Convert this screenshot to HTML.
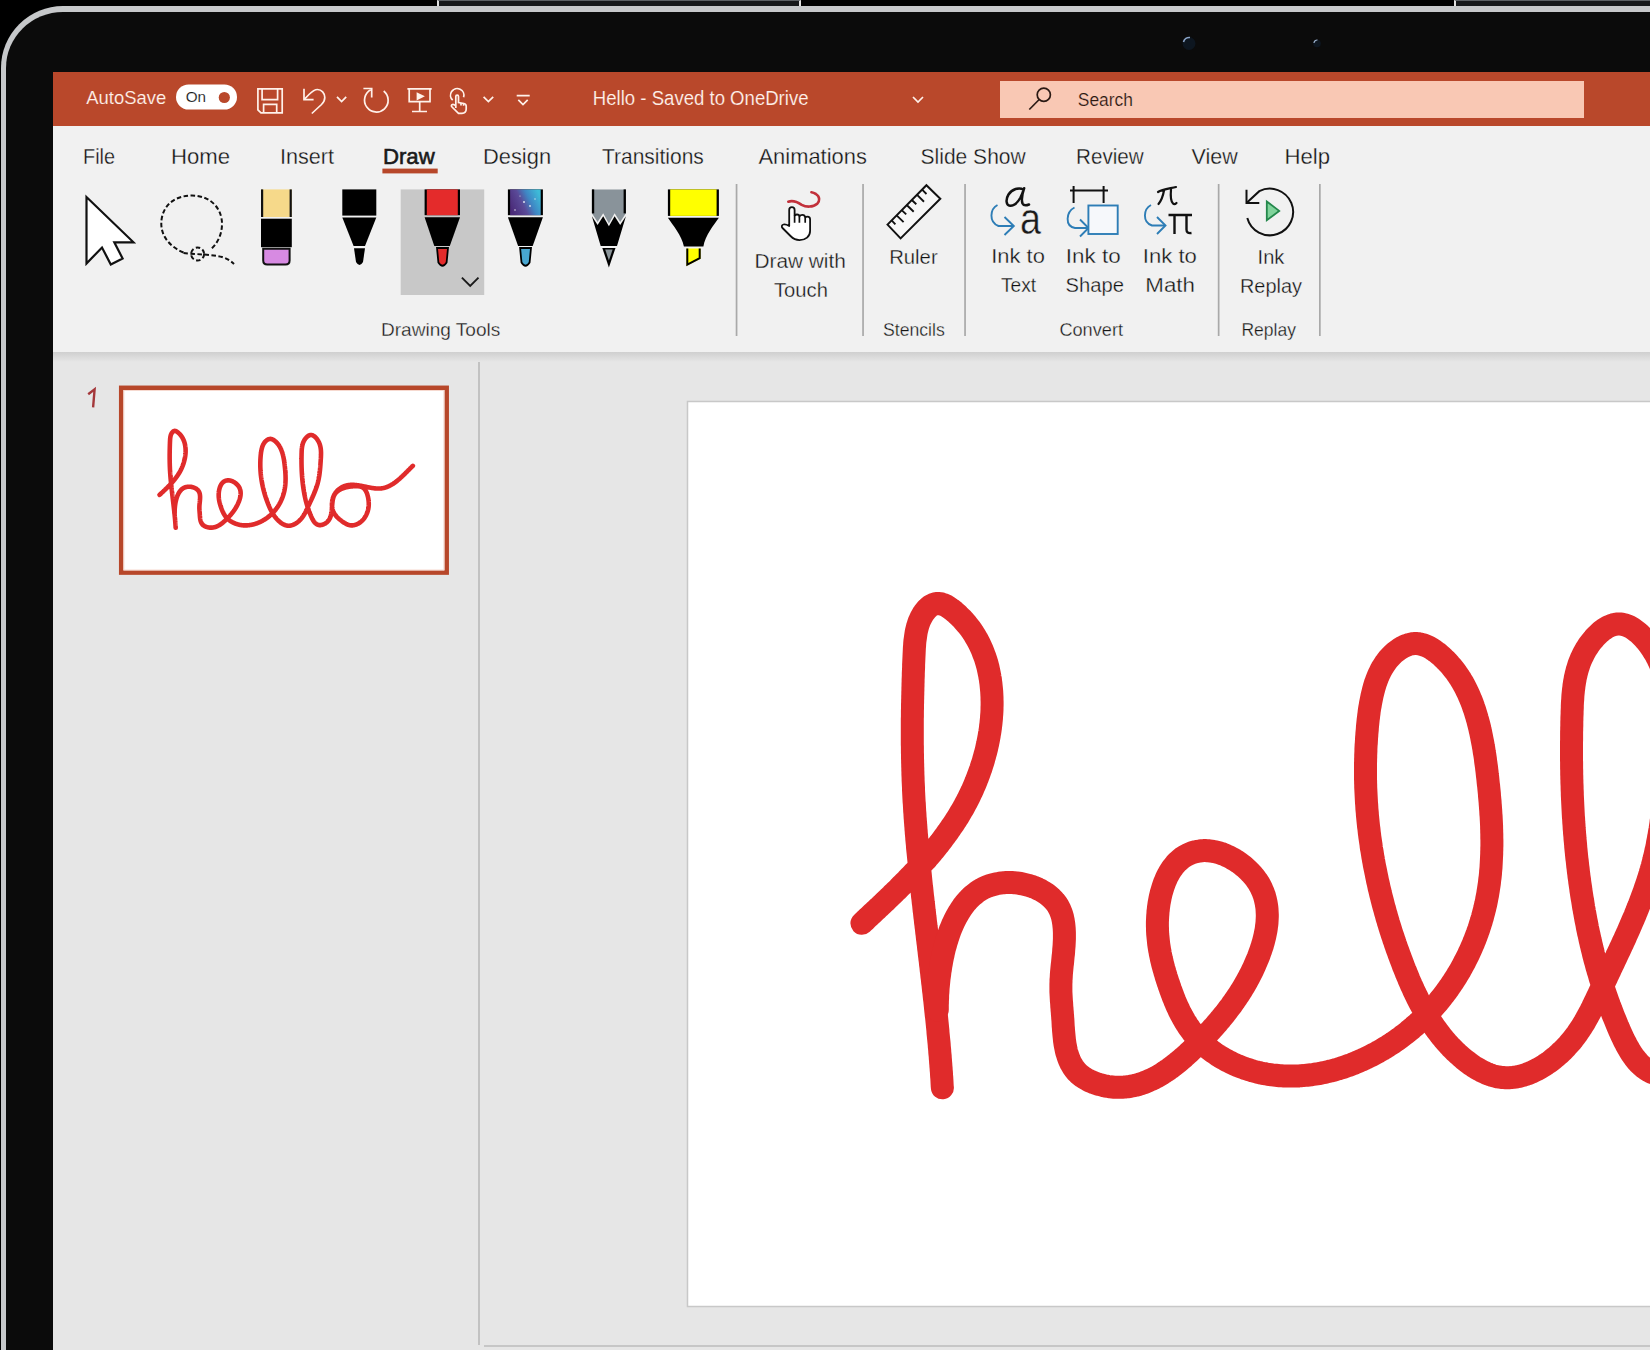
<!DOCTYPE html>
<html><head><meta charset="utf-8">
<style>
html,body{margin:0;padding:0;background:#000;}
body{width:1650px;height:1350px;overflow:hidden;position:relative;font-family:"Liberation Sans",sans-serif;}
.a{position:absolute;}
svg text{font-family:"Liberation Sans",sans-serif;}
</style></head>
<body>
<div class="a" style="left:0;top:0;width:1650px;height:1350px;background:#000"></div>
<!-- top buttons -->
<div class="a" style="left:437px;top:0;width:364px;height:7px;background:#17191b;border-top:1.5px solid #5d6165;border-left:2px solid #e0e0e0;border-right:2px solid #e0e0e0;box-sizing:border-box"></div>
<div class="a" style="left:1454px;top:0;width:200px;height:7px;background:#17191b;border-top:1.5px solid #5d6165;border-left:2px solid #e0e0e0;box-sizing:border-box"></div>
<!-- rim -->
<div class="a" style="left:1px;top:6px;width:1800px;height:1500px;box-sizing:border-box;border-top:6px solid #c6c8ca;border-left:5px solid #c6c8ca;border-top-left-radius:62px;background:#0b0b0b"></div>
<!-- screen -->
<div class="a" style="left:53px;top:72px;width:1597px;height:54.5px;background:#b9482b"></div>
<div class="a" style="left:1000px;top:81px;width:584px;height:37px;background:#f9c8b4"></div>
<div class="a" style="left:53px;top:126px;width:1597px;height:226px;background:#f1f1f1"></div>
<div class="a" style="left:53px;top:352px;width:1597px;height:998px;background:#e6e6e6"></div>
<div class="a" style="left:53px;top:352px;width:1597px;height:10px;background:linear-gradient(#cfcfcf,#e6e6e6)"></div>
<svg class="a" style="left:0;top:0" width="1650" height="1350" viewBox="0 0 1650 1350">
<!-- cameras -->
<circle cx="1189" cy="43.5" r="6.5" fill="#0d1620"/>
<path d="M1183.5,42 A6,6 0 0 1 1190,37.5" stroke="#8aa4c8" stroke-width="1.6" fill="none"/>
<circle cx="1317" cy="43.5" r="3.8" fill="#0d1620"/>
<path d="M1314,43 A3.2,3.2 0 0 1 1317.5,40" stroke="#9fb4d0" stroke-width="1.2" fill="none"/>
<!-- title bar icons -->
<g fill="none" stroke="#fff1ea" stroke-width="1.7" stroke-linecap="butt" stroke-linejoin="miter">
<path d="M257.9,88.9 H282.2 V112.9 H261 L257.9,109.8 Z"/>
<path d="M262.1,88.9 V99.6 H277.6 V88.9"/>
<path d="M263.6,112.9 V104.4 H276.7 V112.9"/>
<path d="M304,88.7 V99.6 H313.6"/>
<path d="M304.5,99.2 L309,94.5 C312,91.5 314.5,89.5 317.5,89.5 C321.5,89.5 324.8,93 324.8,97.5 C324.8,100.5 323.5,102.5 321.5,104.5 L311.8,113.5"/>
<path d="M337,96.8 L341.6,101.6 L346.2,96.8"/>
<path d="M383.7,91 A11.8,11.8 0 1 1 370.8,89.8"/>
<path d="M363.4,88.5 H371.7 V97.6"/>
<path d="M407.4,88.9 H431.7 M409.2,88.9 V101.6 H430 V88.9 M419.7,101.6 V111.5 M412,111.5 H427"/>
<path d="M452.7,100.2 A6.7,6.7 0 1 1 463.6,97.2"/>
<path d="M455.8,108 V96.5 A1.35,1.35 0 0 1 458.5,96.5 V102.5 L464,103.5 C465.5,103.8 466.2,104.8 466.2,106.3 V109 C466.2,111.5 464.5,113.3 462,113.3 H458.5 L452,107 C451,106 451.3,104.8 452.5,104.5 C453.5,104.3 454.5,104.8 455.8,106"/>
<path d="M461,102.9 V105.5 M463.6,103.3 V105.8"/>
<path d="M483.6,96.8 L488.4,101.6 L493.2,96.8"/>
<path d="M516.7,95.6 H529.7 M518.3,99.8 L523,104.5 L527.7,99.8"/>
<path d="M913,97 L918,102 L923,97"/>
</g>
<path d="M416.6,92.2 L424.9,96.3 L416.6,100.4 Z" fill="#fff1ea"/>
<rect x="176" y="84.4" width="61" height="25.2" rx="12.6" fill="#fff"/>
<circle cx="224.3" cy="97.5" r="5.6" fill="#b9482b"/>
<g fill="none" stroke="#2b1a14" stroke-width="1.7">
<circle cx="1043.8" cy="94.8" r="6.6"/>
<path d="M1039.2,99.5 L1029.3,109.5"/>
</g>
<!-- tab underline -->
<rect x="382.4" y="168.6" width="55.3" height="4.8" fill="#b7472a"/>
<!-- separators -->
<g fill="#a9a9a9">
<rect x="735.7" y="184" width="1.7" height="152"/>
<rect x="862.2" y="184" width="1.7" height="152"/>
<rect x="964.2" y="184" width="1.7" height="152"/>
<rect x="1217.8" y="184" width="1.7" height="152"/>
<rect x="1319" y="184" width="1.7" height="152"/>
</g>
<!-- select arrow -->
<path d="M86.5,197 V263.5 L102,247.5 L110.8,264.5 L122.6,258.5 L114.3,242.3 H133.5 Z" fill="#fff" stroke="#111" stroke-width="2.2" stroke-linejoin="miter"/>
<!-- lasso -->
<g fill="none" stroke="#111" stroke-width="2" stroke-dasharray="4.5 2.5">
<path d="M183.5,252.5 C166,245 160,232 161.5,220 C163.5,204 176,195.5 192,195.5 C209,195.5 222,207 222,224 C222,236 216,245 210.5,249.5"/>
<circle cx="197.6" cy="254" r="6.5"/>
<path d="M183.5,253 C195,254.5 210,254 222,257 C227,258.5 231,261 234,264"/>
</g>
<!-- eraser -->
<rect x="261" y="189.4" width="30.8" height="27.6" fill="#f6d98a"/>
<rect x="261" y="189.4" width="2.2" height="27.6" fill="#111"/>
<rect x="289.6" y="189.4" width="2.2" height="27.6" fill="#111"/>
<rect x="261" y="218.7" width="30.8" height="28.5" fill="#000"/>
<path d="M263.2,248.8 H289.6 V260.5 Q289.6,264.5 285.6,264.5 H267.2 Q263.2,264.5 263.2,260.5 Z" fill="#d78ae2" stroke="#111" stroke-width="2"/>
<!-- black pen -->
<rect x="342.3" y="189.4" width="34" height="26.2" fill="#000"/>
<path d="M342.3,217.6 H376.3 L365,246 H353.6 Z" fill="#000"/>
<path d="M354,248.2 H365 L363,262 Q359.5,268 356,262 Z" fill="#000"/>
<!-- selected pen box -->
<rect x="400.7" y="189.4" width="83.5" height="105.6" fill="#c8c8c8"/>
<path d="M461.9,277.6 L470.2,285.9 L478.5,277.6" fill="none" stroke="#1a1a1a" stroke-width="1.9"/>
<!-- red pen -->
<rect x="424.6" y="189.4" width="35.4" height="25.8" fill="#000"/>
<rect x="426.8" y="189.4" width="31" height="25.8" fill="#e42b2b"/>
<path d="M424.6,217.2 H460 L449.8,246 H434.3 Z" fill="#000"/>
<path d="M437,248 H448 L446.6,262.5 Q442.5,269 438.4,262.5 Z" fill="#e42b2b" stroke="#000" stroke-width="1.8"/>
<!-- galaxy pen -->
<defs>
<linearGradient id="gal" x1="0" y1="0.7" x2="1" y2="0.3">
<stop offset="0" stop-color="#4a2a78"/><stop offset="0.4" stop-color="#5a4a98"/><stop offset="0.65" stop-color="#3f86c4"/><stop offset="1" stop-color="#3dbbd8"/>
</linearGradient>
</defs>
<rect x="507.9" y="189.4" width="35" height="25.8" fill="#000"/>
<rect x="510.1" y="189.4" width="30.6" height="25.8" fill="url(#gal)"/>
<g fill="#fff" opacity="0.8"><circle cx="515" cy="210" r="0.8"/><circle cx="524" cy="202" r="1"/><circle cx="530" cy="206" r="0.9"/><circle cx="520" cy="196" r="0.6"/><circle cx="535" cy="199" r="0.7"/></g>
<path d="M507.9,217.2 H542.9 L532.7,246 H518.1 Z" fill="#000"/>
<path d="M520.1,248 H531 L529.6,262.5 Q525.5,269 521.5,262.5 Z" fill="#48a6d0" stroke="#000" stroke-width="1.8"/>
<!-- pencil -->
<path d="M591.9,189.4 H625.9 V213.3 L620.2,222.1 L614.6,213.3 L608.9,223.4 L603.2,213.3 L597.6,222.1 L591.9,213.3 Z" fill="#89939a"/>
<rect x="591.9" y="189.4" width="2.3" height="24" fill="#000"/>
<rect x="623.6" y="189.4" width="2.3" height="24" fill="#000"/>
<path d="M591.9,216.2 L597.6,225 L603.2,216.2 L608.9,226.3 L614.6,216.2 L620.2,225 L625.9,216.2 L617,246 H600.7 Z" fill="#000"/>
<path d="M602.3,247.9 H615.5 L608.9,267.6 Z" fill="#000"/>
<path d="M605.2,249.6 H612.6 L608.9,260.5 Z" fill="#8b959a"/>
<!-- highlighter -->
<rect x="667.9" y="189.4" width="51" height="26.5" fill="#000"/>
<rect x="670.2" y="189.4" width="46.4" height="26.5" fill="#ffff00"/>
<path d="M667.9,217.7 H718.9 C714,224.5 705,236 703.4,246.4 H683.9 C682,236 672.5,224.5 667.9,217.7 Z" fill="#000"/>
<path d="M686.4,248.6 H700.6 V258.7 L686.4,266 Z" fill="#ffff00"/>
<path d="M687.3,248.6 V264.6 L699.7,258.2 V248.6" fill="none" stroke="#000" stroke-width="2"/>
<!-- draw with touch -->
<path d="M788.3,201.7 C792,200.5 796,201 801.7,204.8 C806,207.2 813,207.5 817.2,203.7 C820,201 820,196.5 815.9,194 C814.5,193.2 813,192.6 811.4,192.3" fill="none" stroke="#c2313b" stroke-width="2.6" stroke-linecap="round"/>
<path d="M789.2,226 V210 C789.2,208.2 790.4,207.2 791.9,207.2 C793.4,207.2 794.6,208.2 794.6,210 V215.5 C795.4,214.8 796.3,214.5 797,214.5 C798.3,214.5 799.4,215.3 799.4,216.5 C800.2,215.3 801.2,214.8 802.3,214.8 C803.7,214.8 805,215.7 805.2,217.4 C805.8,216.9 806.5,216.6 807.5,216.6 C809,216.6 810.1,217.6 810.1,219.2 V231 C810.1,236.5 805.5,240.1 799.5,240.1 C795.5,240.1 793,238.5 790.5,236 L782.5,228 C781.3,226.8 781.6,225 783.5,224.5 C785.5,224 787.5,225 789.2,226 Z" fill="#fff" stroke="#111" stroke-width="1.8" stroke-linejoin="round"/>
<path d="M794.6,215.5 V222.8 M799.4,216.5 V222.8 M805.2,217.4 V222.8" fill="none" stroke="#111" stroke-width="1.7"/>
<!-- ruler -->
<path d="M887.5,224.6 L926.4,185.2 L940.3,198.8 L900.6,238.4 Z" fill="#f7f7f7" stroke="#111" stroke-width="2" stroke-linejoin="miter"/>
<g stroke="#111" stroke-width="1.9"><path d="M891.6,220.4 L895.4,224.3 M896.6,215.4 L903.6,222.1 M901.7,210.1 L906.2,214.4 M906.7,205 L913.7,211.8 M911.8,200 L916.3,204.3 M917.1,194.9 L924,201.7 M922.1,189.6 L926.5,194"/></g>
<!-- ink to text -->
<g fill="none" stroke="#2d7db6" stroke-width="1.9">
<path d="M997.5,205 C990,209 988.5,222 998.5,226 L1013.5,226"/>
<path d="M1004.5,217 L1013.8,226 L1004.5,235"/>
<path d="M1074.5,207.5 C1066,212 1064.5,226 1075,228 L1087.5,228"/>
<path d="M1080,219.5 L1088.5,228 L1080,236.5"/>
<rect x="1088.4" y="205.5" width="29.3" height="28.5" fill="#f6f8fb"/>
<path d="M1151,205 C1143.5,209 1142,222 1152,225.5 L1165,225.5"/>
<path d="M1157,217 L1165.5,225.5 L1157,234"/>
</g>
<path d="M1023.5,189.5 C1019,187 1012,189 1008.5,194.5 C1005.5,199.5 1006,205.5 1010,205.8 C1014,206 1018,202 1020.5,197.5 C1022,194.5 1023.3,191 1024.2,188.2 C1022.5,193 1021,199 1022.5,203.5 C1023.5,205.5 1026.5,205.5 1029,204.5" fill="none" stroke="#111" stroke-width="2.5" stroke-linecap="round" stroke-linejoin="round"/>
<text x="1020" y="234" font-size="45" fill="#1a1a1a" stroke="#f1f1f1" stroke-width="0.5" textLength="21" lengthAdjust="spacingAndGlyphs">a</text>
<g stroke="#111" stroke-width="2">
<path d="M1070,190.5 H1108 M1073.6,186 V203 M1103.6,186 V203"/>
</g>
<path d="M1158,192 C1162,189.5 1170,188.5 1176,187 M1164,190.5 C1163,196 1161,201 1158.5,204 M1171,189.5 C1170.5,195 1170.5,201 1173,203.5 C1174,204.5 1175.5,204 1176.5,203" fill="none" stroke="#111" stroke-width="2.2" stroke-linecap="round"/>
<path d="M1168.5,215 H1192 M1174.5,215 V234 M1186.5,215 V229.5 C1186.5,232.5 1188,233.5 1191.5,233" fill="none" stroke="#111" stroke-width="2.4"/>
<!-- ink replay -->
<path d="M1247.3,218 A23.3,23.3 0 1 0 1259.3,191.2 L1246.5,203.1" fill="none" stroke="#111" stroke-width="2"/>
<path d="M1246.5,189.8 V203.1 H1259.3" fill="none" stroke="#111" stroke-width="2"/>
<path d="M1266.8,201.5 L1279.2,210.9 L1266.8,220.2 Z" fill="#80d39b" stroke="#23874b" stroke-width="1.8" stroke-linejoin="miter"/>
<!-- left pane divider & bottom line -->
<rect x="478" y="362" width="2" height="983" fill="#c2c2c2"/>
<rect x="484" y="1345" width="1166" height="2" fill="#c6c6c6"/>
<path d="M88.2,394.2 L94.6,389.3 L93.1,407.3" fill="none" stroke="#a4373a" stroke-width="2.4" stroke-linejoin="miter"/>

<!-- slide -->
<rect x="687.5" y="401.5" width="1000" height="905" fill="#fff" stroke="#c8c8c8" stroke-width="1.5"/>
<g fill="none" stroke="#e02b2b" stroke-width="23" stroke-linecap="round" stroke-linejoin="round">
<path d="M861.9,923.3 L863.4,921.9 L864.9,920.5 L866.3,919.1 L867.8,917.7 L869.3,916.3 L870.8,914.9 L872.3,913.5 L873.8,912.1 L875.3,910.7 L876.8,909.3 L878.2,907.9 L879.7,906.6 L881.2,905.2 L882.6,903.8 L884.1,902.4 L885.6,901.0 L887.0,899.6 L888.5,898.2 L889.9,896.8 L891.4,895.4 L892.8,894.0 L894.3,892.6 L895.7,891.2 L897.2,889.8 L898.6,888.4 L900.0,886.9 L901.4,885.5 L902.8,884.1 L904.2,882.7 L905.6,881.3 L907.0,879.9 L908.4,878.4 L909.8,877.0 L911.2,875.6 L912.6,874.1 L913.9,872.7 L915.3,871.3 L916.7,869.8 L918.0,868.4 L919.4,866.9 L920.7,865.4 L922.0,864.0 L923.3,862.5 L924.7,861.0 L926.0,859.6 L927.3,858.1 L928.5,856.6 L929.8,855.1 L931.1,853.6 L932.4,852.1 L933.6,850.6 L934.9,849.1 L936.1,847.5 L937.3,846.0 L938.6,844.5 L939.8,842.9 L941.0,841.4 L942.2,839.8 L943.3,838.3 L944.5,836.7 L945.7,835.1 L946.8,833.5 L948.0,831.9 L949.1,830.3 L950.2,828.7 L951.3,827.1 L952.4,825.5 L953.5,823.9 L954.6,822.2 L955.7,820.6 L956.7,818.9 L957.8,817.3 L958.8,815.6 L959.8,813.9 L960.8,812.2 L961.8,810.5 L962.8,808.8 L963.8,807.1 L964.7,805.3 L965.6,803.6 L966.6,801.8 L967.5,800.1 L968.4,798.3 L969.3,796.5 L970.2,794.7 L971.0,792.9 L971.9,791.1 L972.7,789.3 L973.5,787.4 L974.3,785.6 L975.1,783.7 L975.9,781.8 L976.6,779.9 L977.4,778.0 L978.1,776.1 L978.8,774.2 L979.5,772.3 L980.2,770.3 L980.9,768.4 L981.5,766.4 L982.1,764.5 L982.8,762.5 L983.4,760.5 L983.9,758.5 L984.5,756.5 L985.0,754.5 L985.6,752.5 L986.1,750.5 L986.6,748.5 L987.0,746.5 L987.5,744.4 L987.9,742.4 L988.3,740.4 L988.7,738.3 L989.1,736.3 L989.4,734.2 L989.8,732.2 L990.1,730.1 L990.4,728.1 L990.6,726.0 L990.9,724.0 L991.1,721.9 L991.3,719.9 L991.5,717.8 L991.6,715.8 L991.8,713.7 L991.9,711.7 L992.0,709.6 L992.0,707.6 L992.1,705.5 L992.1,703.5 L992.1,701.5 L992.0,699.4 L992.0,697.4 L991.9,695.4 L991.8,693.4 L991.7,691.4 L991.5,689.3 L991.3,687.3 L991.1,685.4 L990.9,683.4 L990.6,681.4 L990.4,679.4 L990.0,677.5 L989.7,675.5 L989.3,673.6 L988.9,671.7 L988.5,669.7 L988.1,667.8 L987.6,665.9 L987.1,664.0 L986.6,662.2 L986.0,660.3 L985.4,658.4 L984.8,656.6 L984.1,654.8 L983.4,653.0 L982.7,651.2 L982.0,649.4 L981.2,647.6 L980.4,645.8 L979.6,644.1 L978.7,642.4 L977.8,640.7 L976.9,639.0 L975.9,637.3 L974.9,635.6 L973.9,634.0 L972.9,632.4 L971.8,630.8 L970.7,629.2 L969.5,627.6 L968.3,626.1 L967.1,624.6 L965.8,623.1 L964.5,621.6 L963.2,620.1 L961.9,618.7 L960.5,617.3 L959.0,615.9 L957.6,614.5 L956.1,613.1 L954.5,611.8 L953.0,610.5 L951.4,609.3 L949.7,608.1 L948.1,607.0 L946.5,606.0 L944.8,605.2 L943.1,604.5 L941.5,603.9 L939.8,603.6 L938.2,603.4 L936.6,603.5 L935.0,603.8 L933.5,604.3 L932.0,605.1 L930.5,605.9 L929.1,607.0 L927.8,608.2 L926.5,609.5 L925.3,611.0 L924.1,612.5 L923.0,614.1 L922.0,615.8 L921.1,617.5 L920.2,619.3 L919.4,621.1 L918.7,623.0 L918.1,624.9 L917.5,626.8 L917.0,628.8 L916.5,630.8 L916.1,632.8 L915.8,634.9 L915.5,637.0 L915.2,639.1 L914.9,641.2 L914.7,643.3 L914.6,645.5 L914.4,647.6 L914.3,649.8 L914.2,652.0 L914.1,654.1 L914.0,656.3 L913.9,658.5 L913.8,660.6 L913.7,662.8 L913.6,664.9 L913.6,667.1 L913.5,669.2 L913.4,671.3 L913.3,673.4 L913.3,675.6 L913.2,677.7 L913.1,679.8 L913.1,681.9 L913.0,684.0 L913.0,686.0 L912.9,688.1 L912.9,690.2 L912.8,692.3 L912.8,694.3 L912.7,696.4 L912.7,698.5 L912.6,700.5 L912.6,702.5 L912.5,704.6 L912.5,706.6 L912.5,708.7 L912.4,710.7 L912.4,712.7 L912.4,714.7 L912.4,716.8 L912.3,718.8 L912.3,720.8 L912.3,722.8 L912.3,724.8 L912.3,726.8 L912.3,728.8 L912.3,730.8 L912.3,732.8 L912.3,734.8 L912.3,736.8 L912.3,738.7 L912.3,740.7 L912.3,742.7 L912.3,744.7 L912.4,746.6 L912.4,748.6 L912.4,750.6 L912.4,752.6 L912.5,754.5 L912.5,756.5 L912.5,758.5 L912.6,760.4 L912.6,762.4 L912.7,764.3 L912.7,766.3 L912.8,768.3 L912.8,770.2 L912.9,772.2 L912.9,774.1 L913.0,776.1 L913.1,778.1 L913.1,780.0 L913.2,782.0 L913.3,783.9 L913.4,785.9 L913.5,787.8 L913.5,789.8 L913.6,791.8 L913.7,793.7 L913.8,795.7 L913.9,797.6 L914.0,799.6 L914.1,801.6 L914.3,803.5 L914.4,805.5 L914.5,807.5 L914.6,809.4 L914.7,811.4 L914.9,813.4 L915.0,815.3 L915.1,817.3 L915.3,819.3 L915.4,821.3 L915.6,823.2 L915.7,825.2 L915.9,827.2 L916.0,829.2 L916.2,831.1 L916.3,833.1 L916.5,835.1 L916.7,837.1 L916.8,839.1 L917.0,841.0 L917.2,843.0 L917.4,845.0 L917.5,847.0 L917.7,849.0 L917.9,851.0 L918.1,852.9 L918.3,854.9 L918.5,856.9 L918.7,858.9 L918.9,860.9 L919.0,862.9 L919.2,864.9 L919.4,866.9 L919.6,868.9 L919.9,870.9 L920.1,872.9 L920.3,874.8 L920.5,876.8 L920.7,878.8 L920.9,880.8 L921.1,882.8 L921.3,884.8 L921.5,886.8 L921.8,888.8 L922.0,890.8 L922.2,892.8 L922.4,894.8 L922.6,896.8 L922.9,898.8 L923.1,900.8 L923.3,902.8 L923.6,904.8 L923.8,906.8 L924.0,908.8 L924.2,910.8 L924.5,912.8 L924.7,914.8 L924.9,916.8 L925.2,918.8 L925.4,920.8 L925.6,922.8 L925.9,924.8 L926.1,926.8 L926.4,928.8 L926.6,930.8 L926.8,932.8 L927.1,934.8 L927.3,936.8 L927.5,938.8 L927.8,940.8 L928.0,942.8 L928.3,944.8 L928.5,946.8 L928.7,948.8 L929.0,950.8 L929.2,952.8 L929.4,954.8 L929.7,956.8 L929.9,958.8 L930.2,960.8 L930.4,962.8 L930.6,964.8 L930.9,966.8 L931.1,968.8 L931.3,970.8 L931.6,972.8 L931.8,974.8 L932.0,976.8 L932.3,978.8 L932.5,980.8 L932.7,982.8 L933.0,984.8 L933.2,986.8 L933.4,988.8 L933.6,990.8 L933.9,992.8 L934.1,994.8 L934.3,996.8 L934.5,998.8 L934.8,1000.8 L935.0,1002.8 L935.2,1004.8 L935.4,1006.8 L935.6,1008.8 L935.8,1010.7 L936.0,1012.7 L936.2,1014.7 L936.5,1016.7 L936.7,1018.7 L936.9,1020.7 L937.1,1022.7 L937.3,1024.7 L937.5,1026.7 L937.7,1028.6 L937.9,1030.6 L938.0,1032.6 L938.2,1034.6 L938.4,1036.6 L938.6,1038.6 L938.8,1040.5 L939.0,1042.5 L939.2,1044.5 L939.3,1046.5 L939.5,1048.4 L939.7,1050.4 L939.8,1052.4 L940.0,1054.4 L940.2,1056.3 L940.3,1058.3 L940.5,1060.3 L940.6,1062.3 L940.8,1064.2 L940.9,1066.2 L941.1,1068.2 L941.2,1070.1 L941.4,1072.1 L941.5,1074.1 L941.6,1076.0 L941.8,1078.0 L941.9,1079.9 L942.0,1081.9 L942.1,1083.9 L942.2,1085.8 L942.4,1087.8"/><path d="M937.3,1009.8 L937.3,1008.2 L937.3,1006.5 L937.3,1004.8 L937.4,1003.0 L937.4,1001.3 L937.5,999.5 L937.6,997.6 L937.6,995.8 L937.7,993.9 L937.9,992.0 L938.0,990.0 L938.1,988.1 L938.3,986.1 L938.5,984.1 L938.7,982.1 L938.9,980.1 L939.1,978.0 L939.4,976.0 L939.7,973.9 L939.9,971.8 L940.3,969.8 L940.6,967.7 L940.9,965.6 L941.3,963.5 L941.7,961.3 L942.1,959.2 L942.5,957.1 L943.0,955.0 L943.4,952.9 L943.9,950.8 L944.4,948.7 L945.0,946.6 L945.6,944.5 L946.1,942.5 L946.8,940.4 L947.4,938.4 L948.1,936.3 L948.8,934.3 L949.5,932.3 L950.2,930.3 L951.0,928.4 L951.8,926.4 L952.6,924.5 L953.5,922.6 L954.3,920.8 L955.3,918.9 L956.2,917.1 L957.2,915.3 L958.2,913.6 L959.2,911.9 L960.3,910.2 L961.4,908.5 L962.5,906.9 L963.6,905.4 L964.8,903.8 L966.1,902.3 L967.3,900.9 L968.6,899.5 L969.9,898.1 L971.3,896.8 L972.7,895.6 L974.1,894.4 L975.6,893.2 L977.1,892.1 L978.6,891.0 L980.2,890.0 L981.8,889.1 L983.5,888.2 L985.2,887.4 L986.9,886.7 L988.7,886.0 L990.5,885.3 L992.3,884.8 L994.2,884.3 L996.1,883.8 L998.1,883.5 L1000.0,883.2 L1002.0,882.9 L1004.0,882.7 L1006.0,882.6 L1008.1,882.5 L1010.1,882.6 L1012.2,882.6 L1014.2,882.7 L1016.3,882.9 L1018.3,883.2 L1020.4,883.5 L1022.4,883.8 L1024.4,884.3 L1026.4,884.8 L1028.4,885.3 L1030.4,885.9 L1032.3,886.5 L1034.2,887.3 L1036.1,888.0 L1037.9,888.9 L1039.7,889.7 L1041.4,890.7 L1043.2,891.7 L1044.8,892.7 L1046.4,893.8 L1048.0,895.0 L1049.5,896.2 L1050.9,897.4 L1052.3,898.8 L1053.6,900.1 L1054.8,901.6 L1056.0,903.0 L1057.1,904.6 L1058.1,906.1 L1059.0,907.8 L1059.8,909.4 L1060.5,911.2 L1061.2,912.9 L1061.8,914.7 L1062.4,916.6 L1062.8,918.5 L1063.2,920.4 L1063.5,922.4 L1063.8,924.3 L1064.0,926.4 L1064.2,928.4 L1064.3,930.5 L1064.4,932.6 L1064.4,934.7 L1064.4,936.8 L1064.4,939.0 L1064.3,941.2 L1064.2,943.3 L1064.1,945.5 L1063.9,947.7 L1063.7,949.9 L1063.6,952.1 L1063.4,954.3 L1063.1,956.5 L1062.9,958.7 L1062.7,960.9 L1062.5,963.1 L1062.2,965.3 L1062.0,967.4 L1061.8,969.6 L1061.6,971.7 L1061.4,973.8 L1061.3,975.9 L1061.2,978.0 L1061.0,980.0 L1061.0,982.0 L1060.9,984.0 L1060.9,986.0 L1060.9,987.9 L1060.9,989.8 L1060.9,991.7 L1061.0,993.6 L1061.1,995.4 L1061.2,997.3 L1061.3,999.2 L1061.4,1001.0 L1061.6,1002.9 L1061.7,1004.7 L1061.8,1006.6 L1062.0,1008.5 L1062.1,1010.3 L1062.3,1012.2 L1062.4,1014.1 L1062.6,1016.1 L1062.7,1018.0 L1062.9,1020.0 L1063.0,1022.0 L1063.1,1024.0 L1063.2,1026.1 L1063.4,1028.1 L1063.5,1030.2 L1063.7,1032.2 L1063.9,1034.3 L1064.1,1036.4 L1064.3,1038.4 L1064.5,1040.5 L1064.8,1042.5 L1065.1,1044.6 L1065.5,1046.6 L1065.9,1048.6 L1066.3,1050.6 L1066.8,1052.5 L1067.4,1054.4 L1068.0,1056.3 L1068.7,1058.2 L1069.4,1060.0 L1070.2,1061.8 L1071.0,1063.5 L1072.0,1065.2 L1073.0,1066.9 L1074.1,1068.5 L1075.3,1070.0 L1076.5,1071.5 L1077.9,1072.9 L1079.3,1074.3 L1080.9,1075.5 L1082.5,1076.8 L1084.3,1077.9 L1086.1,1079.0 L1087.9,1080.0 L1089.8,1081.0 L1091.8,1081.8 L1093.8,1082.7 L1095.8,1083.4 L1097.9,1084.1 L1100.0,1084.7 L1102.0,1085.2 L1104.1,1085.7 L1106.1,1086.1 L1108.2,1086.5 L1110.2,1086.8 L1112.2,1087.0 L1114.2,1087.2 L1116.2,1087.3 L1118.2,1087.3 L1120.1,1087.3 L1122.1,1087.3 L1124.0,1087.1 L1125.9,1087.0 L1127.8,1086.7 L1129.7,1086.5 L1131.6,1086.1 L1133.5,1085.7 L1135.4,1085.3 L1137.2,1084.8 L1139.0,1084.3 L1140.9,1083.7 L1142.7,1083.1 L1144.5,1082.5 L1146.3,1081.8 L1148.1,1081.0 L1149.8,1080.2 L1151.6,1079.4 L1153.3,1078.6 L1155.1,1077.7 L1156.8,1076.8 L1158.5,1075.8 L1160.2,1074.8 L1161.9,1073.8 L1163.6,1072.7 L1165.2,1071.6 L1166.9,1070.5 L1168.5,1069.4 L1170.2,1068.2 L1171.8,1067.0 L1173.4,1065.8 L1175.0,1064.5 L1176.6,1063.3 L1178.2,1062.0 L1179.7,1060.7 L1181.3,1059.4 L1182.9,1058.0 L1184.4,1056.7 L1185.9,1055.3 L1187.5,1053.9 L1189.0,1052.5 L1190.5,1051.1 L1192.0,1049.7 L1193.4,1048.3 L1194.9,1046.8 L1196.4,1045.4 L1197.8,1043.9 L1199.3,1042.5 L1200.7,1041.0 L1202.1,1039.5 L1203.5,1038.1 L1205.0,1036.6 L1206.4,1035.1 L1207.7,1033.6 L1209.1,1032.2 L1210.5,1030.7 L1211.8,1029.2 L1213.2,1027.7 L1214.5,1026.2 L1215.8,1024.7 L1217.2,1023.2 L1218.5,1021.6 L1219.7,1020.1 L1221.0,1018.6 L1222.3,1017.0 L1223.5,1015.5 L1224.8,1013.9 L1226.0,1012.4 L1227.2,1010.8 L1228.4,1009.2 L1229.6,1007.6 L1230.8,1006.1 L1232.0,1004.5 L1233.1,1002.8 L1234.3,1001.2 L1235.4,999.6 L1236.5,998.0 L1237.6,996.3 L1238.7,994.7 L1239.8,993.0 L1240.8,991.4 L1241.9,989.7 L1242.9,988.0 L1243.9,986.3 L1244.9,984.6 L1245.9,982.9 L1246.9,981.1 L1247.8,979.4 L1248.8,977.6 L1249.7,975.9 L1250.6,974.1 L1251.5,972.3 L1252.4,970.5 L1253.3,968.7 L1254.1,966.9 L1254.9,965.0 L1255.7,963.2 L1256.5,961.3 L1257.3,959.4 L1258.1,957.6 L1258.8,955.7 L1259.5,953.8 L1260.2,951.8 L1260.9,949.9 L1261.5,948.0 L1262.2,946.1 L1262.7,944.1 L1263.3,942.2 L1263.8,940.2 L1264.3,938.2 L1264.8,936.3 L1265.2,934.3 L1265.6,932.3 L1266.0,930.4 L1266.3,928.4 L1266.5,926.5 L1266.8,924.5 L1267.0,922.5 L1267.1,920.6 L1267.2,918.6 L1267.3,916.7 L1267.3,914.7 L1267.2,912.8 L1267.1,910.8 L1267.0,908.9 L1266.8,907.0 L1266.5,905.1 L1266.2,903.2 L1265.8,901.3 L1265.4,899.5 L1264.9,897.6 L1264.4,895.7 L1263.7,893.9 L1263.1,892.1 L1262.3,890.3 L1261.5,888.5 L1260.6,886.7 L1259.7,885.0 L1258.7,883.2 L1257.6,881.5 L1256.4,879.8 L1255.2,878.2 L1253.9,876.5 L1252.5,874.9 L1251.1,873.3 L1249.7,871.8 L1248.2,870.3 L1246.6,868.8 L1245.0,867.4 L1243.3,866.0 L1241.6,864.6 L1239.9,863.3 L1238.1,862.1 L1236.3,860.9 L1234.5,859.7 L1232.6,858.7 L1230.7,857.6 L1228.8,856.7 L1226.9,855.8 L1225.0,854.9 L1223.0,854.1 L1221.1,853.4 L1219.1,852.8 L1217.1,852.2 L1215.1,851.8 L1213.2,851.4 L1211.2,851.1 L1209.2,850.8 L1207.3,850.7 L1205.3,850.6 L1203.4,850.6 L1201.5,850.8 L1199.6,851.0 L1197.7,851.3 L1195.8,851.7 L1194.0,852.2 L1192.2,852.7 L1190.5,853.4 L1188.8,854.1 L1187.1,854.9 L1185.5,855.8 L1183.9,856.8 L1182.3,857.8 L1180.8,859.0 L1179.4,860.2 L1178.0,861.4 L1176.7,862.7 L1175.4,864.1 L1174.2,865.6 L1173.0,867.1 L1171.9,868.6 L1170.8,870.2 L1169.7,871.9 L1168.8,873.6 L1167.8,875.4 L1166.9,877.2 L1166.1,879.0 L1165.3,880.9 L1164.5,882.8 L1163.8,884.7 L1163.1,886.7 L1162.5,888.7 L1161.9,890.7 L1161.3,892.7 L1160.8,894.8 L1160.3,896.9 L1159.9,899.0 L1159.5,901.1 L1159.1,903.2 L1158.8,905.3 L1158.5,907.4 L1158.3,909.5 L1158.0,911.6 L1157.9,913.7 L1157.7,915.9 L1157.6,917.9 L1157.5,920.0 L1157.4,922.1 L1157.4,924.2 L1157.4,926.2 L1157.5,928.2 L1157.5,930.2 L1157.6,932.2 L1157.7,934.2 L1157.9,936.2 L1158.1,938.2 L1158.3,940.1 L1158.5,942.1 L1158.7,944.0 L1159.0,946.0 L1159.3,947.9 L1159.6,949.8 L1160.0,951.7 L1160.3,953.6 L1160.7,955.5 L1161.1,957.4 L1161.5,959.3 L1162.0,961.2 L1162.4,963.1 L1162.9,965.0 L1163.4,966.9 L1163.9,968.7 L1164.5,970.6 L1165.0,972.5 L1165.6,974.4 L1166.1,976.3 L1166.7,978.1 L1167.3,980.0 L1167.9,981.9 L1168.6,983.8 L1169.2,985.7 L1169.9,987.6 L1170.5,989.4 L1171.2,991.3 L1171.9,993.2 L1172.6,995.1 L1173.3,997.0 L1174.1,998.9 L1174.8,1000.7 L1175.6,1002.6 L1176.4,1004.5 L1177.2,1006.3 L1178.1,1008.1 L1178.9,1010.0 L1179.8,1011.8 L1180.7,1013.6 L1181.7,1015.4 L1182.6,1017.2 L1183.6,1018.9 L1184.6,1020.7 L1185.7,1022.4 L1186.7,1024.1 L1187.8,1025.8 L1189.0,1027.5 L1190.1,1029.1 L1191.3,1030.7 L1192.5,1032.4 L1193.8,1033.9 L1195.0,1035.5 L1196.4,1037.0 L1197.7,1038.5 L1199.1,1040.0 L1200.5,1041.5 L1202.0,1042.9 L1203.5,1044.3 L1205.0,1045.6 L1206.6,1047.0 L1208.1,1048.3 L1209.8,1049.5 L1211.4,1050.8 L1213.1,1052.0 L1214.8,1053.2 L1216.5,1054.3 L1218.2,1055.5 L1219.9,1056.6 L1221.7,1057.6 L1223.5,1058.6 L1225.2,1059.6 L1227.0,1060.6 L1228.8,1061.5 L1230.6,1062.4 L1232.5,1063.3 L1234.3,1064.2 L1236.1,1065.0 L1238.0,1065.8 L1239.8,1066.5 L1241.7,1067.2 L1243.5,1067.9 L1245.4,1068.6 L1247.2,1069.2 L1249.1,1069.8 L1251.0,1070.4 L1252.9,1071.0 L1254.8,1071.5 L1256.7,1072.0 L1258.6,1072.4 L1260.5,1072.9 L1262.4,1073.3 L1264.3,1073.6 L1266.2,1074.0 L1268.2,1074.3 L1270.1,1074.6 L1272.0,1074.9 L1273.9,1075.1 L1275.9,1075.3 L1277.8,1075.5 L1279.7,1075.7 L1281.7,1075.8 L1283.6,1075.9 L1285.6,1076.0 L1287.5,1076.1 L1289.5,1076.1 L1291.4,1076.1 L1293.4,1076.1 L1295.3,1076.0 L1297.3,1076.0 L1299.2,1075.9 L1301.2,1075.7 L1303.1,1075.6 L1305.1,1075.4 L1307.0,1075.2 L1309.0,1075.0 L1310.9,1074.8 L1312.9,1074.5 L1314.8,1074.2 L1316.8,1073.9 L1318.7,1073.6 L1320.7,1073.2 L1322.6,1072.8 L1324.5,1072.4 L1326.5,1072.0 L1328.4,1071.5 L1330.3,1071.1 L1332.3,1070.6 L1334.2,1070.1 L1336.1,1069.5 L1338.0,1069.0 L1339.9,1068.4 L1341.8,1067.8 L1343.7,1067.2 L1345.6,1066.5 L1347.5,1065.8 L1349.4,1065.2 L1351.3,1064.5 L1353.2,1063.7 L1355.0,1063.0 L1356.9,1062.2 L1358.8,1061.4 L1360.6,1060.6 L1362.5,1059.8 L1364.3,1058.9 L1366.1,1058.1 L1368.0,1057.2 L1369.8,1056.3 L1371.6,1055.4 L1373.4,1054.4 L1375.2,1053.5 L1377.0,1052.5 L1378.7,1051.5 L1380.5,1050.5 L1382.3,1049.5 L1384.0,1048.4 L1385.8,1047.4 L1387.5,1046.3 L1389.2,1045.2 L1390.9,1044.1 L1392.6,1043.0 L1394.3,1041.8 L1396.0,1040.6 L1397.7,1039.5 L1399.3,1038.3 L1401.0,1037.1 L1402.6,1035.8 L1404.2,1034.6 L1405.9,1033.3 L1407.5,1032.1 L1409.0,1030.8 L1410.6,1029.5 L1412.2,1028.2 L1413.7,1026.8 L1415.3,1025.5 L1416.8,1024.1 L1418.3,1022.8 L1419.8,1021.4 L1421.3,1020.0 L1422.8,1018.6 L1424.2,1017.1 L1425.7,1015.7 L1427.1,1014.2 L1428.5,1012.8 L1429.9,1011.3 L1431.3,1009.8 L1432.7,1008.3 L1434.0,1006.8 L1435.3,1005.3 L1436.7,1003.7 L1438.0,1002.2 L1439.3,1000.6 L1440.5,999.0 L1441.8,997.4 L1443.0,995.9 L1444.3,994.2 L1445.5,992.6 L1446.7,991.0 L1447.9,989.4 L1449.0,987.7 L1450.2,986.1 L1451.3,984.4 L1452.5,982.7 L1453.6,981.0 L1454.6,979.4 L1455.7,977.7 L1456.8,975.9 L1457.8,974.2 L1458.9,972.5 L1459.9,970.8 L1460.9,969.0 L1461.8,967.3 L1462.8,965.5 L1463.8,963.7 L1464.7,962.0 L1465.6,960.2 L1466.5,958.4 L1467.4,956.6 L1468.3,954.8 L1469.1,953.0 L1470.0,951.2 L1470.8,949.4 L1471.6,947.5 L1472.4,945.7 L1473.2,943.9 L1473.9,942.0 L1474.7,940.2 L1475.4,938.3 L1476.1,936.5 L1476.8,934.6 L1477.5,932.7 L1478.1,930.9 L1478.8,929.0 L1479.4,927.1 L1480.0,925.2 L1480.6,923.3 L1481.2,921.5 L1481.7,919.6 L1482.3,917.7 L1482.8,915.8 L1483.3,913.9 L1483.8,912.0 L1484.3,910.1 L1484.8,908.1 L1485.2,906.2 L1485.7,904.3 L1486.1,902.4 L1486.5,900.5 L1486.8,898.6 L1487.2,896.7 L1487.6,894.7 L1487.9,892.8 L1488.2,890.9 L1488.5,889.0 L1488.8,887.0 L1489.1,885.1 L1489.4,883.2 L1489.6,881.2 L1489.8,879.3 L1490.1,877.4 L1490.3,875.4 L1490.5,873.5 L1490.6,871.5 L1490.8,869.6 L1491.0,867.6 L1491.1,865.7 L1491.2,863.7 L1491.3,861.8 L1491.4,859.8 L1491.5,857.8 L1491.6,855.9 L1491.7,853.9 L1491.7,851.9 L1491.8,850.0 L1491.8,848.0 L1491.9,846.0 L1491.9,844.1 L1491.9,842.1 L1491.9,840.1 L1491.8,838.1 L1491.8,836.1 L1491.8,834.1 L1491.7,832.2 L1491.7,830.2 L1491.6,828.2 L1491.6,826.2 L1491.5,824.2 L1491.4,822.2 L1491.3,820.2 L1491.2,818.2 L1491.1,816.1 L1490.9,814.1 L1490.8,812.1 L1490.7,810.1 L1490.5,808.1 L1490.4,806.1 L1490.2,804.0 L1490.1,802.0 L1489.9,800.0 L1489.7,797.9 L1489.5,795.9 L1489.4,793.9 L1489.2,791.8 L1489.0,789.8 L1488.8,787.8 L1488.6,785.7 L1488.3,783.7 L1488.1,781.6 L1487.9,779.5 L1487.7,777.5 L1487.4,775.4 L1487.2,773.4 L1487.0,771.3 L1486.7,769.2 L1486.5,767.2 L1486.2,765.1 L1485.9,763.0 L1485.6,761.0 L1485.4,758.9 L1485.1,756.9 L1484.8,754.8 L1484.4,752.7 L1484.1,750.7 L1483.8,748.6 L1483.4,746.6 L1483.1,744.6 L1482.7,742.5 L1482.3,740.5 L1481.9,738.5 L1481.5,736.4 L1481.1,734.4 L1480.7,732.4 L1480.2,730.4 L1479.8,728.4 L1479.3,726.4 L1478.8,724.4 L1478.3,722.5 L1477.8,720.5 L1477.2,718.5 L1476.7,716.6 L1476.1,714.7 L1475.5,712.7 L1474.9,710.8 L1474.3,708.9 L1473.6,707.0 L1473.0,705.2 L1472.3,703.3 L1471.6,701.4 L1470.8,699.6 L1470.1,697.8 L1469.3,696.0 L1468.5,694.2 L1467.7,692.4 L1466.8,690.6 L1466.0,688.9 L1465.1,687.1 L1464.2,685.4 L1463.2,683.7 L1462.3,682.0 L1461.3,680.4 L1460.3,678.7 L1459.2,677.1 L1458.2,675.5 L1457.1,673.9 L1456.0,672.3 L1454.8,670.7 L1453.6,669.2 L1452.4,667.7 L1451.2,666.2 L1449.9,664.8 L1448.6,663.3 L1447.3,661.9 L1445.9,660.5 L1444.5,659.1 L1443.1,657.8 L1441.7,656.4 L1440.2,655.1 L1438.6,653.8 L1437.1,652.6 L1435.5,651.4 L1433.9,650.3 L1432.3,649.2 L1430.6,648.2 L1428.9,647.2 L1427.2,646.4 L1425.5,645.6 L1423.7,645.0 L1421.9,644.4 L1420.1,644.0 L1418.3,643.7 L1416.5,643.6 L1414.6,643.6 L1412.8,643.7 L1410.9,644.0 L1409.0,644.5 L1407.1,645.1 L1405.2,645.9 L1403.4,646.8 L1401.5,647.8 L1399.7,648.9 L1398.0,650.1 L1396.3,651.4 L1394.6,652.7 L1393.0,654.1 L1391.5,655.6 L1390.1,657.1 L1388.7,658.6 L1387.4,660.2 L1386.2,661.8 L1385.0,663.5 L1383.9,665.2 L1382.8,666.9 L1381.8,668.7 L1380.8,670.4 L1379.9,672.3 L1379.0,674.1 L1378.2,676.0 L1377.4,677.9 L1376.7,679.8 L1376.0,681.7 L1375.3,683.6 L1374.7,685.6 L1374.1,687.6 L1373.6,689.5 L1373.1,691.5 L1372.6,693.5 L1372.1,695.5 L1371.7,697.5 L1371.3,699.5 L1370.9,701.5 L1370.5,703.5 L1370.2,705.5 L1369.8,707.5 L1369.5,709.4 L1369.2,711.4 L1369.0,713.4 L1368.7,715.4 L1368.5,717.4 L1368.2,719.4 L1368.0,721.4 L1367.8,723.4 L1367.6,725.3 L1367.4,727.3 L1367.3,729.3 L1367.1,731.3 L1366.9,733.3 L1366.8,735.3 L1366.6,737.3 L1366.5,739.3 L1366.4,741.3 L1366.3,743.2 L1366.1,745.2 L1366.0,747.2 L1365.9,749.2 L1365.9,751.2 L1365.8,753.2 L1365.7,755.2 L1365.7,757.2 L1365.6,759.2 L1365.6,761.2 L1365.5,763.2 L1365.5,765.1 L1365.5,767.1 L1365.5,769.1 L1365.5,771.1 L1365.5,773.1 L1365.5,775.1 L1365.5,777.1 L1365.5,779.1 L1365.6,781.1 L1365.6,783.1 L1365.7,785.0 L1365.7,787.0 L1365.8,789.0 L1365.9,791.0 L1366.0,793.0 L1366.1,795.0 L1366.2,797.0 L1366.3,799.0 L1366.4,801.0 L1366.5,802.9 L1366.7,804.9 L1366.8,806.9 L1366.9,808.9 L1367.1,810.9 L1367.3,812.9 L1367.4,814.9 L1367.6,816.8 L1367.8,818.8 L1368.0,820.8 L1368.2,822.8 L1368.4,824.8 L1368.6,826.8 L1368.9,828.7 L1369.1,830.7 L1369.3,832.7 L1369.6,834.7 L1369.8,836.6 L1370.1,838.6 L1370.4,840.6 L1370.7,842.6 L1371.0,844.5 L1371.2,846.5 L1371.5,848.5 L1371.9,850.5 L1372.2,852.4 L1372.5,854.4 L1372.8,856.4 L1373.2,858.3 L1373.5,860.3 L1373.9,862.3 L1374.2,864.2 L1374.6,866.2 L1375.0,868.1 L1375.4,870.1 L1375.8,872.1 L1376.2,874.0 L1376.6,876.0 L1377.0,877.9 L1377.4,879.9 L1377.8,881.8 L1378.3,883.8 L1378.7,885.7 L1379.1,887.7 L1379.6,889.6 L1380.1,891.6 L1380.5,893.5 L1381.0,895.5 L1381.5,897.4 L1382.0,899.4 L1382.5,901.3 L1383.0,903.2 L1383.5,905.2 L1384.0,907.1 L1384.6,909.0 L1385.1,911.0 L1385.6,912.9 L1386.2,914.8 L1386.7,916.8 L1387.3,918.7 L1387.9,920.6 L1388.4,922.5 L1389.0,924.4 L1389.6,926.4 L1390.2,928.3 L1390.8,930.2 L1391.4,932.1 L1392.0,934.0 L1392.7,935.9 L1393.3,937.8 L1393.9,939.7 L1394.6,941.6 L1395.2,943.5 L1395.9,945.4 L1396.5,947.3 L1397.2,949.2 L1397.9,951.1 L1398.6,953.0 L1399.3,954.9 L1400.0,956.8 L1400.7,958.7 L1401.4,960.6 L1402.1,962.4 L1402.8,964.3 L1403.5,966.2 L1404.3,968.1 L1405.0,969.9 L1405.8,971.8 L1406.5,973.7 L1407.3,975.5 L1408.1,977.4 L1408.8,979.2 L1409.6,981.1 L1410.4,982.9 L1411.2,984.8 L1412.1,986.6 L1412.9,988.4 L1413.7,990.3 L1414.6,992.1 L1415.4,993.9 L1416.3,995.7 L1417.2,997.5 L1418.1,999.3 L1419.0,1001.1 L1419.9,1002.8 L1420.9,1004.6 L1421.8,1006.4 L1422.8,1008.1 L1423.8,1009.9 L1424.8,1011.6 L1425.8,1013.3 L1426.8,1015.1 L1427.8,1016.8 L1428.9,1018.5 L1429.9,1020.1 L1431.0,1021.8 L1432.1,1023.5 L1433.2,1025.1 L1434.4,1026.8 L1435.5,1028.4 L1436.7,1030.0 L1437.9,1031.6 L1439.1,1033.2 L1440.3,1034.8 L1441.6,1036.4 L1442.8,1037.9 L1444.1,1039.5 L1445.4,1041.0 L1446.7,1042.5 L1448.1,1044.0 L1449.4,1045.5 L1450.8,1047.0 L1452.2,1048.4 L1453.7,1049.9 L1455.1,1051.3 L1456.6,1052.7 L1458.1,1054.1 L1459.6,1055.4 L1461.2,1056.8 L1462.7,1058.1 L1464.3,1059.5 L1465.9,1060.7 L1467.6,1062.0 L1469.2,1063.2 L1470.9,1064.5 L1472.6,1065.6 L1474.3,1066.8 L1476.0,1067.9 L1477.8,1068.9 L1479.6,1069.9 L1481.3,1070.9 L1483.1,1071.8 L1484.9,1072.6 L1486.7,1073.4 L1488.6,1074.2 L1490.4,1074.8 L1492.3,1075.5 L1494.1,1076.0 L1496.0,1076.5 L1497.9,1076.9 L1499.8,1077.2 L1501.6,1077.5 L1503.5,1077.6 L1505.4,1077.7 L1507.3,1077.7 L1509.2,1077.7 L1511.2,1077.6 L1513.1,1077.4 L1515.0,1077.1 L1516.9,1076.8 L1518.8,1076.4 L1520.7,1076.0 L1522.6,1075.5 L1524.5,1074.9 L1526.3,1074.3 L1528.2,1073.6 L1530.1,1072.8 L1531.9,1072.1 L1533.8,1071.2 L1535.6,1070.3 L1537.4,1069.4 L1539.3,1068.4 L1541.0,1067.4 L1542.8,1066.3 L1544.6,1065.2 L1546.3,1064.0 L1548.1,1062.8 L1549.8,1061.6 L1551.5,1060.3 L1553.1,1059.0 L1554.8,1057.7 L1556.4,1056.3 L1558.0,1054.9 L1559.6,1053.5 L1561.1,1052.0 L1562.7,1050.6 L1564.1,1049.1 L1565.6,1047.6 L1567.0,1046.0 L1568.4,1044.5 L1569.8,1042.9 L1571.2,1041.4 L1572.5,1039.8 L1573.7,1038.2 L1575.0,1036.5 L1576.2,1034.9 L1577.4,1033.3 L1578.5,1031.6 L1579.6,1030.0 L1580.7,1028.3 L1581.8,1026.7 L1582.8,1025.0 L1583.9,1023.3 L1584.9,1021.6 L1585.8,1019.9 L1586.8,1018.2 L1587.7,1016.5 L1588.7,1014.7 L1589.6,1013.0 L1590.5,1011.3 L1591.4,1009.5 L1592.3,1007.8 L1593.1,1006.0 L1594.0,1004.2 L1594.8,1002.5 L1595.7,1000.7 L1596.5,998.9 L1597.3,997.2 L1598.2,995.4 L1599.0,993.6 L1599.8,991.8 L1600.7,990.0 L1601.5,988.2 L1602.3,986.4 L1603.2,984.7 L1604.0,982.9 L1604.9,981.1 L1605.7,979.3 L1606.6,977.5 L1607.4,975.7 L1608.3,973.9 L1609.1,972.1 L1610.0,970.3 L1610.8,968.4 L1611.7,966.6 L1612.5,964.8 L1613.4,963.0 L1614.3,961.2 L1615.1,959.4 L1616.0,957.6 L1616.8,955.7 L1617.7,953.9 L1618.5,952.1 L1619.4,950.3 L1620.2,948.5 L1621.1,946.6 L1621.9,944.8 L1622.8,943.0 L1623.6,941.1 L1624.5,939.3 L1625.3,937.5 L1626.1,935.6 L1626.9,933.8 L1627.8,931.9 L1628.6,930.1 L1629.4,928.2 L1630.2,926.4 L1631.0,924.5 L1631.8,922.7 L1632.6,920.8 L1633.4,919.0 L1634.2,917.1 L1635.0,915.3 L1635.7,913.4 L1636.5,911.5 L1637.2,909.7 L1638.0,907.8 L1638.7,905.9 L1639.5,904.1 L1640.2,902.2 L1640.9,900.3 L1641.6,898.4 L1642.3,896.5 L1643.0,894.7 L1643.7,892.8 L1644.4,890.9 L1645.0,889.0 L1645.7,887.1 L1646.3,885.2 L1647.0,883.3 L1647.6,881.4 L1648.2,879.5 L1648.8,877.6 L1649.4,875.7 L1650.0,873.8 L1650.5,871.9 L1651.1,870.0 L1651.6,868.1 L1652.2,866.2 L1652.7,864.3 L1653.2,862.4 L1653.7,860.4 L1654.1,858.5 L1654.6,856.6 L1655.1,854.7 L1655.5,852.7 L1655.9,850.8 L1656.4,848.9 L1656.8,846.9 L1657.2,845.0 L1657.5,843.1 L1657.9,841.1 L1658.3,839.2 L1658.6,837.2 L1659.0,835.3 L1659.3,833.4 L1659.6,831.4 L1660.0,829.4 L1660.3,827.5 L1660.6,825.5 L1660.9,823.6 L1661.1,821.6 L1661.4,819.7 L1661.7,817.7 L1661.9,815.7 L1662.2,813.8 L1662.4,811.8 L1662.7,809.8 L1662.9,807.8 L1663.1,805.9 L1663.4,803.9 L1663.6,801.9 L1663.8,799.9 L1664.0,797.9 L1664.2,795.9 L1664.4,794.0 L1664.5,792.0 L1664.7,790.0 L1664.9,788.0 L1665.1,786.0 L1665.2,784.0 L1665.4,782.0 L1665.6,780.0 L1665.7,778.0 L1665.9,776.0 L1666.0,774.0 L1666.2,772.0 L1666.3,769.9 L1666.5,767.9 L1666.6,765.9 L1666.7,763.9 L1666.9,761.9 L1667.0,759.9 L1667.2,757.8 L1667.3,755.8 L1667.4,753.8 L1667.6,751.8 L1667.7,749.7 L1667.8,747.7 L1667.9,745.7 L1668.1,743.6 L1668.2,741.6 L1668.3,739.5 L1668.4,737.5 L1668.6,735.5 L1668.7,733.4 L1668.8,731.4 L1668.8,729.4 L1668.9,727.3 L1669.0,725.3 L1669.0,723.3 L1669.1,721.2 L1669.1,719.2 L1669.1,717.2 L1669.1,715.1 L1669.1,713.1 L1669.1,711.1 L1669.0,709.1 L1668.9,707.1 L1668.8,705.1 L1668.7,703.1 L1668.6,701.1 L1668.4,699.1 L1668.2,697.1 L1668.0,695.1 L1667.8,693.1 L1667.5,691.2 L1667.2,689.2 L1666.9,687.2 L1666.5,685.3 L1666.1,683.3 L1665.7,681.4 L1665.3,679.5 L1664.8,677.6 L1664.3,675.6 L1663.7,673.7 L1663.1,671.8 L1662.5,670.0 L1661.8,668.1 L1661.1,666.2 L1660.4,664.4 L1659.6,662.5 L1658.7,660.7 L1657.9,658.8 L1656.9,657.0 L1656.0,655.2 L1655.0,653.4 L1653.9,651.7 L1652.8,649.9 L1651.6,648.1 L1650.4,646.4 L1649.2,644.7 L1647.9,642.9 L1646.5,641.2 L1645.1,639.6 L1643.6,638.0 L1642.1,636.4 L1640.6,634.9 L1639.1,633.4 L1637.5,632.1 L1635.8,630.8 L1634.2,629.6 L1632.5,628.4 L1630.8,627.4 L1629.1,626.5 L1627.3,625.8 L1625.6,625.1 L1623.8,624.6 L1622.1,624.2 L1620.3,624.0 L1618.5,624.0 L1616.7,624.1 L1614.9,624.4 L1613.2,624.8 L1611.4,625.4 L1609.6,626.1 L1607.9,626.9 L1606.2,627.9 L1604.5,629.0 L1602.8,630.2 L1601.1,631.5 L1599.5,632.9 L1598.0,634.3 L1596.4,635.8 L1594.9,637.4 L1593.5,639.1 L1592.1,640.7 L1590.7,642.5 L1589.4,644.2 L1588.2,646.0 L1587.0,647.8 L1585.9,649.5 L1584.9,651.3 L1583.9,653.2 L1583.0,655.0 L1582.1,656.8 L1581.2,658.7 L1580.4,660.6 L1579.7,662.4 L1579.0,664.3 L1578.4,666.2 L1577.8,668.1 L1577.2,670.0 L1576.7,672.0 L1576.2,673.9 L1575.8,675.8 L1575.3,677.8 L1575.0,679.7 L1574.6,681.7 L1574.3,683.7 L1574.0,685.6 L1573.8,687.6 L1573.5,689.6 L1573.3,691.6 L1573.1,693.6 L1572.9,695.6 L1572.8,697.6 L1572.7,699.6 L1572.5,701.6 L1572.4,703.6 L1572.3,705.7 L1572.3,707.7 L1572.2,709.7 L1572.1,711.7 L1572.1,713.7 L1572.0,715.8 L1571.9,717.8 L1571.9,719.8 L1571.8,721.8 L1571.8,723.8 L1571.8,725.9 L1571.7,727.9 L1571.7,729.9 L1571.6,731.9 L1571.6,734.0 L1571.6,736.0 L1571.6,738.0 L1571.6,740.0 L1571.5,742.1 L1571.5,744.1 L1571.5,746.1 L1571.5,748.1 L1571.5,750.2 L1571.5,752.2 L1571.5,754.2 L1571.5,756.2 L1571.5,758.2 L1571.5,760.3 L1571.6,762.3 L1571.6,764.3 L1571.6,766.3 L1571.6,768.4 L1571.7,770.4 L1571.7,772.4 L1571.7,774.4 L1571.8,776.4 L1571.8,778.5 L1571.9,780.5 L1571.9,782.5 L1572.0,784.5 L1572.1,786.5 L1572.1,788.5 L1572.2,790.6 L1572.3,792.6 L1572.3,794.6 L1572.4,796.6 L1572.5,798.6 L1572.6,800.6 L1572.7,802.6 L1572.8,804.7 L1572.9,806.7 L1573.0,808.7 L1573.1,810.7 L1573.2,812.7 L1573.3,814.7 L1573.4,816.7 L1573.6,818.7 L1573.7,820.7 L1573.8,822.7 L1574.0,824.7 L1574.1,826.7 L1574.2,828.7 L1574.4,830.7 L1574.5,832.7 L1574.7,834.7 L1574.9,836.7 L1575.0,838.7 L1575.2,840.7 L1575.4,842.7 L1575.6,844.7 L1575.7,846.7 L1575.9,848.7 L1576.1,850.7 L1576.3,852.6 L1576.5,854.6 L1576.7,856.6 L1576.9,858.6 L1577.2,860.6 L1577.4,862.6 L1577.6,864.5 L1577.8,866.5 L1578.1,868.5 L1578.3,870.5 L1578.5,872.4 L1578.8,874.4 L1579.0,876.4 L1579.3,878.3 L1579.6,880.3 L1579.8,882.3 L1580.1,884.2 L1580.4,886.2 L1580.7,888.1 L1580.9,890.1 L1581.2,892.0 L1581.5,894.0 L1581.8,895.9 L1582.1,897.9 L1582.5,899.8 L1582.8,901.8 L1583.1,903.7 L1583.4,905.7 L1583.7,907.6 L1584.1,909.5 L1584.4,911.5 L1584.8,913.4 L1585.1,915.3 L1585.5,917.3 L1585.8,919.2 L1586.2,921.1 L1586.6,923.1 L1587.0,925.0 L1587.3,926.9 L1587.7,928.8 L1588.1,930.7 L1588.5,932.7 L1589.0,934.6 L1589.4,936.5 L1589.8,938.4 L1590.2,940.3 L1590.7,942.2 L1591.1,944.2 L1591.6,946.1 L1592.0,948.0 L1592.5,949.9 L1593.0,951.8 L1593.4,953.7 L1593.9,955.7 L1594.4,957.6 L1594.9,959.5 L1595.4,961.4 L1596.0,963.3 L1596.5,965.2 L1597.0,967.2 L1597.6,969.1 L1598.1,971.0 L1598.7,972.9 L1599.3,974.8 L1599.8,976.8 L1600.4,978.7 L1601.0,980.6 L1601.6,982.6 L1602.2,984.5 L1602.9,986.4 L1603.5,988.3 L1604.1,990.3 L1604.8,992.2 L1605.5,994.2 L1606.1,996.1 L1606.8,998.0 L1607.5,1000.0 L1608.2,1001.9 L1608.9,1003.9 L1609.6,1005.8 L1610.4,1007.8 L1611.1,1009.8 L1611.9,1011.7 L1612.6,1013.7 L1613.4,1015.7 L1614.2,1017.6 L1615.0,1019.6 L1615.8,1021.6 L1616.6,1023.6 L1617.4,1025.6 L1618.3,1027.5 L1619.1,1029.5 L1620.0,1031.5 L1620.9,1033.5 L1621.8,1035.5 L1622.7,1037.4 L1623.6,1039.4 L1624.6,1041.3 L1625.6,1043.2 L1626.5,1045.0 L1627.6,1046.9 L1628.6,1048.7 L1629.6,1050.5 L1630.7,1052.2 L1631.8,1053.9 L1632.9,1055.6 L1634.1,1057.2 L1635.3,1058.7 L1636.5,1060.2 L1637.7,1061.7 L1639.0,1063.1 L1640.3,1064.4 L1641.6,1065.6 L1643.0,1066.8 L1644.4,1068.0 L1645.8,1069.0 L1647.3,1070.0 L1648.8,1070.9 L1650.3,1071.7 L1651.9,1072.4 L1653.5,1073.0 L1655.2,1073.5 L1656.9,1074.0 L1658.6,1074.3 L1660.4,1074.6 L1662.2,1074.7 L1664.1,1074.7 L1666.0,1074.6 L1667.9,1074.5 L1669.8,1074.2 L1671.8,1073.8 L1673.8,1073.4 L1675.8,1072.8 L1677.7,1072.2 L1679.7,1071.5 L1681.6,1070.8 L1683.6,1070.0 L1685.4,1069.1 L1687.3,1068.1 L1689.1,1067.1 L1690.9,1066.1 L1692.6,1065.0 L1694.2,1063.8 L1695.8,1062.6 L1697.4,1061.4 L1698.9,1060.1 L1700.3,1058.7 L1701.7,1057.4 L1703.0,1056.0 L1704.3,1054.5 L1705.5,1053.0 L1706.7,1051.5 L1707.8,1049.9 L1708.9,1048.3 L1709.9,1046.7 L1710.9,1045.0 L1711.8,1043.3 L1712.7,1041.6 L1713.5,1039.9 L1714.3,1038.1 L1715.1,1036.3 L1715.8,1034.5 L1716.4,1032.6 L1717.1,1030.7 L1717.7,1028.8 L1718.2,1026.9 L1718.7,1025.0 L1719.2,1023.0 L1719.7,1021.1 L1720.1,1019.1 L1720.5,1017.1 L1720.8,1015.0 L1721.2,1013.0 L1721.5,1011.0 L1721.8,1008.9 L1722.1,1006.8 L1722.3,1004.7 L1722.6,1002.6 L1722.8,1000.5 L1723.0,998.4 L1723.2,996.3 L1723.4,994.2 L1723.6,992.1 L1723.7,990.0 L1723.9,987.8 L1724.1,985.7 L1724.2,983.6 L1724.4,981.5 L1724.5,979.3 L1724.7,977.2 L1724.8,975.1 L1725.0,973.0 L1725.2,970.9 L1725.4,968.8 L1725.6,966.7 L1725.8,964.6 L1726.0,962.5 L1726.2,960.5 L1726.5,958.4 L1726.7,956.4 L1727.0,954.4 L1727.3,952.4 L1727.6,950.4 L1728.0,948.4 L1728.4,946.5 L1728.8,944.5 L1729.2,942.6 L1729.7,940.7 L1730.1,938.8 L1730.7,937.0 L1731.2,935.2 L1731.8,933.4 L1732.5,931.6 L1733.2,929.8 L1733.9,928.1 L1734.6,926.4 L1735.4,924.8 L1736.3,923.1 L1737.2,921.5 L1738.2,920.0 L1739.2,918.5 L1740.2,917.0 L1741.3,915.5 L1742.5,914.1 L1743.7,912.7 L1744.9,911.3 L1746.2,910.0 L1747.6,908.7 L1748.9,907.4 L1750.4,906.2 L1751.8,905.0 L1753.4,903.9 L1754.9,902.7 L1756.5,901.6 L1758.1,900.6 L1759.8,899.5 L1761.4,898.5 L1763.2,897.5 L1764.9,896.6 L1766.7,895.7 L1768.5,894.8 L1770.4,893.9 L1772.2,893.1 L1774.1,892.3 L1776.0,891.5 L1778.0,890.8 L1780.0,890.1 L1781.9,889.4 L1783.9,888.7 L1786.0,888.1 L1788.0,887.5 L1790.1,886.9 L1792.1,886.3 L1794.2,885.8 L1796.3,885.3 L1798.4,884.8 L1800.6,884.3 L1802.7,883.9 L1804.8,883.5 L1807.0,883.1 L1809.1,882.7 L1811.3,882.4 L1813.4,882.1 L1815.6,881.8 L1817.7,881.5 L1819.9,881.3 L1822.0,881.1 L1824.2,880.9 L1826.4,880.7 L1828.5,880.5 L1830.6,880.4 L1832.8,880.2 L1834.9,880.1 L1837.0,880.1 L1839.1,880.0 L1841.2,880.0 L1843.3,879.9 L1845.3,879.9 L1847.4,880.0 L1849.4,880.0 L1851.4,880.1 L1853.4,880.2 L1855.3,880.3 L1857.3,880.5 L1859.2,880.7 L1861.1,880.9 L1862.9,881.2 L1864.7,881.6 L1866.5,882.0 L1868.3,882.5 L1870.0,883.0 L1871.7,883.6 L1873.3,884.3 L1874.9,885.0 L1876.5,885.8 L1878.0,886.7 L1879.5,887.7 L1880.9,888.8 L1882.3,889.9 L1883.6,891.1 L1884.9,892.4 L1886.2,893.8 L1887.4,895.2 L1888.6,896.7 L1889.7,898.2 L1890.8,899.8 L1891.8,901.5 L1892.8,903.2 L1893.8,904.9 L1894.7,906.7 L1895.6,908.6 L1896.5,910.4 L1897.3,912.4 L1898.1,914.3 L1898.9,916.3 L1899.6,918.3 L1900.3,920.4 L1900.9,922.4 L1901.5,924.5 L1902.1,926.6 L1902.7,928.7 L1903.2,930.8 L1903.7,933.0 L1904.2,935.1 L1904.6,937.2 L1905.0,939.4 L1905.4,941.5 L1905.7,943.6 L1906.0,945.7 L1906.3,947.8 L1906.6,949.9 L1906.8,952.0 L1907.1,954.1 L1907.2,956.2 L1907.4,958.2 L1907.5,960.3 L1907.6,962.3 L1907.7,964.4 L1907.8,966.4 L1907.8,968.5 L1907.8,970.5 L1907.7,972.5 L1907.6,974.5 L1907.5,976.5 L1907.4,978.5 L1907.2,980.5 L1907.1,982.4 L1906.8,984.4 L1906.6,986.4 L1906.3,988.3 L1906.0,990.3 L1905.6,992.2 L1905.3,994.2 L1904.8,996.1 L1904.4,998.0 L1903.9,1000.0 L1903.4,1001.9 L1902.9,1003.8 L1902.3,1005.7 L1901.7,1007.6 L1901.1,1009.5 L1900.4,1011.4 L1899.7,1013.3 L1899.0,1015.2 L1898.2,1017.0 L1897.4,1018.9 L1896.6,1020.7 L1895.8,1022.6 L1894.9,1024.4 L1893.9,1026.2 L1893.0,1028.0 L1892.0,1029.7 L1891.0,1031.5 L1889.9,1033.2 L1888.8,1034.9 L1887.7,1036.6 L1886.5,1038.3 L1885.4,1040.0 L1884.1,1041.6 L1882.9,1043.2 L1881.6,1044.8 L1880.3,1046.3 L1878.9,1047.9 L1877.5,1049.4 L1876.1,1050.8 L1874.7,1052.3 L1873.2,1053.7 L1871.7,1055.1 L1870.1,1056.5 L1868.5,1057.8 L1866.9,1059.1 L1865.2,1060.3 L1863.6,1061.6 L1861.8,1062.8 L1860.1,1063.9 L1858.3,1065.0 L1856.5,1066.1 L1854.7,1067.1 L1852.9,1068.1 L1851.0,1069.0 L1849.1,1069.9 L1847.3,1070.7 L1845.3,1071.5 L1843.4,1072.2 L1841.5,1072.9 L1839.5,1073.5 L1837.6,1074.0 L1835.6,1074.5 L1833.7,1074.9 L1831.7,1075.3 L1829.7,1075.6 L1827.8,1075.8 L1825.8,1075.9 L1823.8,1076.0 L1821.9,1076.0 L1819.9,1076.0 L1818.0,1075.8 L1816.0,1075.6 L1814.1,1075.3 L1812.2,1074.9 L1810.3,1074.5 L1808.4,1074.0 L1806.5,1073.4 L1804.6,1072.8 L1802.8,1072.1 L1800.9,1071.4 L1799.1,1070.6 L1797.3,1069.7 L1795.4,1068.8 L1793.6,1067.9 L1791.8,1066.9 L1790.0,1065.9 L1788.2,1064.8 L1786.5,1063.8 L1784.7,1062.6 L1783.0,1061.5 L1781.2,1060.3 L1779.5,1059.1 L1777.8,1057.9 L1776.1,1056.7 L1774.4,1055.4 L1772.7,1054.2 L1771.0,1052.9 L1769.4,1051.6 L1767.7,1050.3 L1766.1,1049.1 L1764.5,1047.8 L1762.9,1046.5 L1761.3,1045.1 L1759.7,1043.8 L1758.2,1042.5 L1756.7,1041.1 L1755.1,1039.8 L1753.7,1038.4 L1752.2,1037.0 L1750.8,1035.6 L1749.4,1034.2 L1748.0,1032.8 L1746.6,1031.3 L1745.3,1029.9 L1744.0,1028.4 L1742.8,1026.9 L1741.5,1025.3 L1740.4,1023.8 L1739.2,1022.2 L1738.1,1020.6 L1737.0,1019.0 L1736.0,1017.3 L1735.0,1015.7 L1734.0,1014.0 L1733.1,1012.2 L1732.3,1010.5 L1731.4,1008.7 L1730.6,1006.9 L1729.9,1005.1 L1729.2,1003.2 L1728.6,1001.3 L1727.9,999.5 L1727.4,997.5 L1726.8,995.6 L1726.4,993.7 L1725.9,991.7 L1725.5,989.8 L1725.1,987.8 L1724.8,985.8 L1724.5,983.8 L1724.3,981.8 L1724.1,979.7 L1723.9,977.7 L1723.8,975.7 L1723.7,973.6 L1723.7,971.6 L1723.7,969.5 L1723.8,967.5 L1723.8,965.4 L1724.0,963.4 L1724.1,961.3 L1724.4,959.3 L1724.6,957.2 L1724.9,955.2 L1725.2,953.1 L1725.6,951.1 L1726.0,949.1 L1726.4,947.1 L1726.9,945.0 L1727.5,943.0 L1728.0,941.1 L1728.6,939.1 L1729.3,937.1 L1730.0,935.2 L1730.7,933.2 L1731.5,931.3 L1732.3,929.4 L1733.1,927.6 L1734.0,925.7 L1734.9,923.9 L1735.9,922.0 L1736.9,920.3 L1737.9,918.5 L1739.0,916.8 L1740.1,915.0 L1741.2,913.3 L1742.4,911.7 L1743.7,910.1 L1744.9,908.5 L1746.2,906.9 L1747.6,905.4 L1748.9,903.9 L1750.3,902.4 L1751.8,900.9 L1753.3,899.5 L1754.8,898.2 L1756.3,896.8 L1757.9,895.5 L1759.5,894.3 L1761.1,893.0 L1762.7,891.8 L1764.4,890.7 L1766.1,889.5 L1767.8,888.4 L1769.5,887.4 L1771.2,886.4 L1773.0,885.4 L1774.8,884.4 L1776.6,883.5 L1778.4,882.7 L1780.2,881.9 L1782.1,881.1 L1783.9,880.3 L1785.8,879.6 L1787.7,878.9 L1789.5,878.3 L1791.4,877.7 L1793.3,877.2 L1795.2,876.7 L1797.1,876.2 L1799.0,875.8 L1800.9,875.4 L1802.8,875.0 L1804.8,874.7 L1806.7,874.4 L1808.6,874.2 L1810.6,873.9 L1812.5,873.7 L1814.5,873.6 L1816.4,873.4 L1818.4,873.3 L1820.4,873.3 L1822.3,873.2 L1824.3,873.2 L1826.3,873.2 L1828.3,873.2 L1830.3,873.3 L1832.3,873.4 L1834.3,873.5 L1836.3,873.6 L1838.3,873.8 L1840.3,873.9 L1842.3,874.1 L1844.3,874.3 L1846.3,874.6 L1848.3,874.8 L1850.3,875.1 L1852.4,875.3 L1854.4,875.6 L1856.4,875.9 L1858.4,876.3 L1860.5,876.6 L1862.5,876.9 L1864.5,877.3 L1866.6,877.7 L1868.6,878.0 L1870.6,878.4 L1872.7,878.8 L1874.7,879.2 L1876.8,879.6 L1878.8,880.0 L1880.8,880.4 L1882.9,880.8 L1884.9,881.3 L1887.0,881.7 L1889.0,882.1 L1891.0,882.5 L1893.1,883.0 L1895.1,883.4 L1897.1,883.8 L1899.2,884.2 L1901.2,884.7 L1903.2,885.1 L1905.3,885.5 L1907.3,885.9 L1909.3,886.3 L1911.4,886.7 L1913.4,887.0 L1915.4,887.4 L1917.4,887.8 L1919.4,888.1 L1921.5,888.5 L1923.5,888.8 L1925.5,889.1 L1927.5,889.4 L1929.5,889.7 L1931.5,890.0 L1933.5,890.2 L1935.5,890.5 L1937.5,890.7 L1939.4,890.9 L1941.4,891.1 L1943.4,891.2 L1945.4,891.4 L1947.3,891.5 L1949.3,891.6 L1951.3,891.7 L1953.2,891.7 L1955.2,891.7 L1957.1,891.7 L1959.0,891.7 L1961.0,891.7 L1962.9,891.6 L1964.8,891.5 L1966.7,891.3 L1968.6,891.2 L1970.5,891.0 L1972.4,890.7 L1974.3,890.5 L1976.2,890.2 L1978.1,889.8 L1980.0,889.5 L1981.8,889.1 L1983.7,888.6 L1985.5,888.2 L1987.4,887.7 L1989.2,887.1 L1991.0,886.6 L1992.9,886.0 L1994.7,885.4 L1996.5,884.7 L1998.3,884.1 L2000.1,883.4 L2001.9,882.6 L2003.7,881.9 L2005.4,881.1 L2007.2,880.3 L2009.0,879.5 L2010.7,878.6 L2012.5,877.7 L2014.2,876.8 L2016.0,875.9 L2017.7,874.9 L2019.4,874.0 L2021.1,873.0 L2022.9,871.9 L2024.6,870.9 L2026.3,869.8 L2028.0,868.8 L2029.7,867.7 L2031.3,866.6 L2033.0,865.4 L2034.7,864.3 L2036.3,863.1 L2038.0,861.9 L2039.7,860.7 L2041.3,859.5 L2042.9,858.3 L2044.6,857.0 L2046.2,855.8 L2047.8,854.5 L2049.4,853.2 L2051.1,851.9 L2052.7,850.6 L2054.3,849.3 L2055.9,847.9 L2057.4,846.6 L2059.0,845.2 L2060.6,843.9 L2062.2,842.5 L2063.7,841.1 L2065.3,839.7 L2066.8,838.3 L2068.4,836.9 L2069.9,835.5 L2071.5,834.1 L2073.0,832.7 L2074.5,831.2 L2076.0,829.8 L2077.5,828.4 L2079.0,826.9 L2080.5,825.5 L2082.0,824.0 L2083.5,822.6 L2085.0,821.1 L2086.5,819.7 L2088.0,818.2 L2089.4,816.8 L2090.9,815.3 L2092.3,813.9 L2093.8,812.4 L2095.2,811.0 L2096.7,809.5 L2098.1,808.1 L2099.5,806.6 L2101.0,805.2 L2102.4,803.8 L2103.8,802.4 L2105.2,800.9 L2106.6,799.5 L2108.0,798.1 L2109.4,796.7 L2110.8,795.3 L2112.1,793.9 L2113.5,792.6 L2114.9,791.2 L2116.3,789.8 L2117.6,788.5 L2119.0,787.2 L2120.3,785.8 L2121.7,784.5 L2123.0,783.2 L2124.3,781.9 L2125.7,780.7 L2127.0,779.4 L2128.3,778.1"/>
</g>
<!-- thumbnail -->
<rect x="121.2" y="387.8" width="325.5" height="184.8" fill="#fff" stroke="#b7472a" stroke-width="4.5"/>
<rect x="123.9" y="390.5" width="320" height="179.5" fill="none" stroke="#f6d9cf" stroke-width="1"/>
<g transform="translate(-12.8,310.2) scale(0.2)" fill="none" stroke="#e02b2b" stroke-width="23" stroke-linecap="round" stroke-linejoin="round">
<path d="M861.9,923.3 L863.4,921.9 L864.9,920.5 L866.3,919.1 L867.8,917.7 L869.3,916.3 L870.8,914.9 L872.3,913.5 L873.8,912.1 L875.3,910.7 L876.8,909.3 L878.2,907.9 L879.7,906.6 L881.2,905.2 L882.6,903.8 L884.1,902.4 L885.6,901.0 L887.0,899.6 L888.5,898.2 L889.9,896.8 L891.4,895.4 L892.8,894.0 L894.3,892.6 L895.7,891.2 L897.2,889.8 L898.6,888.4 L900.0,886.9 L901.4,885.5 L902.8,884.1 L904.2,882.7 L905.6,881.3 L907.0,879.9 L908.4,878.4 L909.8,877.0 L911.2,875.6 L912.6,874.1 L913.9,872.7 L915.3,871.3 L916.7,869.8 L918.0,868.4 L919.4,866.9 L920.7,865.4 L922.0,864.0 L923.3,862.5 L924.7,861.0 L926.0,859.6 L927.3,858.1 L928.5,856.6 L929.8,855.1 L931.1,853.6 L932.4,852.1 L933.6,850.6 L934.9,849.1 L936.1,847.5 L937.3,846.0 L938.6,844.5 L939.8,842.9 L941.0,841.4 L942.2,839.8 L943.3,838.3 L944.5,836.7 L945.7,835.1 L946.8,833.5 L948.0,831.9 L949.1,830.3 L950.2,828.7 L951.3,827.1 L952.4,825.5 L953.5,823.9 L954.6,822.2 L955.7,820.6 L956.7,818.9 L957.8,817.3 L958.8,815.6 L959.8,813.9 L960.8,812.2 L961.8,810.5 L962.8,808.8 L963.8,807.1 L964.7,805.3 L965.6,803.6 L966.6,801.8 L967.5,800.1 L968.4,798.3 L969.3,796.5 L970.2,794.7 L971.0,792.9 L971.9,791.1 L972.7,789.3 L973.5,787.4 L974.3,785.6 L975.1,783.7 L975.9,781.8 L976.6,779.9 L977.4,778.0 L978.1,776.1 L978.8,774.2 L979.5,772.3 L980.2,770.3 L980.9,768.4 L981.5,766.4 L982.1,764.5 L982.8,762.5 L983.4,760.5 L983.9,758.5 L984.5,756.5 L985.0,754.5 L985.6,752.5 L986.1,750.5 L986.6,748.5 L987.0,746.5 L987.5,744.4 L987.9,742.4 L988.3,740.4 L988.7,738.3 L989.1,736.3 L989.4,734.2 L989.8,732.2 L990.1,730.1 L990.4,728.1 L990.6,726.0 L990.9,724.0 L991.1,721.9 L991.3,719.9 L991.5,717.8 L991.6,715.8 L991.8,713.7 L991.9,711.7 L992.0,709.6 L992.0,707.6 L992.1,705.5 L992.1,703.5 L992.1,701.5 L992.0,699.4 L992.0,697.4 L991.9,695.4 L991.8,693.4 L991.7,691.4 L991.5,689.3 L991.3,687.3 L991.1,685.4 L990.9,683.4 L990.6,681.4 L990.4,679.4 L990.0,677.5 L989.7,675.5 L989.3,673.6 L988.9,671.7 L988.5,669.7 L988.1,667.8 L987.6,665.9 L987.1,664.0 L986.6,662.2 L986.0,660.3 L985.4,658.4 L984.8,656.6 L984.1,654.8 L983.4,653.0 L982.7,651.2 L982.0,649.4 L981.2,647.6 L980.4,645.8 L979.6,644.1 L978.7,642.4 L977.8,640.7 L976.9,639.0 L975.9,637.3 L974.9,635.6 L973.9,634.0 L972.9,632.4 L971.8,630.8 L970.7,629.2 L969.5,627.6 L968.3,626.1 L967.1,624.6 L965.8,623.1 L964.5,621.6 L963.2,620.1 L961.9,618.7 L960.5,617.3 L959.0,615.9 L957.6,614.5 L956.1,613.1 L954.5,611.8 L953.0,610.5 L951.4,609.3 L949.7,608.1 L948.1,607.0 L946.5,606.0 L944.8,605.2 L943.1,604.5 L941.5,603.9 L939.8,603.6 L938.2,603.4 L936.6,603.5 L935.0,603.8 L933.5,604.3 L932.0,605.1 L930.5,605.9 L929.1,607.0 L927.8,608.2 L926.5,609.5 L925.3,611.0 L924.1,612.5 L923.0,614.1 L922.0,615.8 L921.1,617.5 L920.2,619.3 L919.4,621.1 L918.7,623.0 L918.1,624.9 L917.5,626.8 L917.0,628.8 L916.5,630.8 L916.1,632.8 L915.8,634.9 L915.5,637.0 L915.2,639.1 L914.9,641.2 L914.7,643.3 L914.6,645.5 L914.4,647.6 L914.3,649.8 L914.2,652.0 L914.1,654.1 L914.0,656.3 L913.9,658.5 L913.8,660.6 L913.7,662.8 L913.6,664.9 L913.6,667.1 L913.5,669.2 L913.4,671.3 L913.3,673.4 L913.3,675.6 L913.2,677.7 L913.1,679.8 L913.1,681.9 L913.0,684.0 L913.0,686.0 L912.9,688.1 L912.9,690.2 L912.8,692.3 L912.8,694.3 L912.7,696.4 L912.7,698.5 L912.6,700.5 L912.6,702.5 L912.5,704.6 L912.5,706.6 L912.5,708.7 L912.4,710.7 L912.4,712.7 L912.4,714.7 L912.4,716.8 L912.3,718.8 L912.3,720.8 L912.3,722.8 L912.3,724.8 L912.3,726.8 L912.3,728.8 L912.3,730.8 L912.3,732.8 L912.3,734.8 L912.3,736.8 L912.3,738.7 L912.3,740.7 L912.3,742.7 L912.3,744.7 L912.4,746.6 L912.4,748.6 L912.4,750.6 L912.4,752.6 L912.5,754.5 L912.5,756.5 L912.5,758.5 L912.6,760.4 L912.6,762.4 L912.7,764.3 L912.7,766.3 L912.8,768.3 L912.8,770.2 L912.9,772.2 L912.9,774.1 L913.0,776.1 L913.1,778.1 L913.1,780.0 L913.2,782.0 L913.3,783.9 L913.4,785.9 L913.5,787.8 L913.5,789.8 L913.6,791.8 L913.7,793.7 L913.8,795.7 L913.9,797.6 L914.0,799.6 L914.1,801.6 L914.3,803.5 L914.4,805.5 L914.5,807.5 L914.6,809.4 L914.7,811.4 L914.9,813.4 L915.0,815.3 L915.1,817.3 L915.3,819.3 L915.4,821.3 L915.6,823.2 L915.7,825.2 L915.9,827.2 L916.0,829.2 L916.2,831.1 L916.3,833.1 L916.5,835.1 L916.7,837.1 L916.8,839.1 L917.0,841.0 L917.2,843.0 L917.4,845.0 L917.5,847.0 L917.7,849.0 L917.9,851.0 L918.1,852.9 L918.3,854.9 L918.5,856.9 L918.7,858.9 L918.9,860.9 L919.0,862.9 L919.2,864.9 L919.4,866.9 L919.6,868.9 L919.9,870.9 L920.1,872.9 L920.3,874.8 L920.5,876.8 L920.7,878.8 L920.9,880.8 L921.1,882.8 L921.3,884.8 L921.5,886.8 L921.8,888.8 L922.0,890.8 L922.2,892.8 L922.4,894.8 L922.6,896.8 L922.9,898.8 L923.1,900.8 L923.3,902.8 L923.6,904.8 L923.8,906.8 L924.0,908.8 L924.2,910.8 L924.5,912.8 L924.7,914.8 L924.9,916.8 L925.2,918.8 L925.4,920.8 L925.6,922.8 L925.9,924.8 L926.1,926.8 L926.4,928.8 L926.6,930.8 L926.8,932.8 L927.1,934.8 L927.3,936.8 L927.5,938.8 L927.8,940.8 L928.0,942.8 L928.3,944.8 L928.5,946.8 L928.7,948.8 L929.0,950.8 L929.2,952.8 L929.4,954.8 L929.7,956.8 L929.9,958.8 L930.2,960.8 L930.4,962.8 L930.6,964.8 L930.9,966.8 L931.1,968.8 L931.3,970.8 L931.6,972.8 L931.8,974.8 L932.0,976.8 L932.3,978.8 L932.5,980.8 L932.7,982.8 L933.0,984.8 L933.2,986.8 L933.4,988.8 L933.6,990.8 L933.9,992.8 L934.1,994.8 L934.3,996.8 L934.5,998.8 L934.8,1000.8 L935.0,1002.8 L935.2,1004.8 L935.4,1006.8 L935.6,1008.8 L935.8,1010.7 L936.0,1012.7 L936.2,1014.7 L936.5,1016.7 L936.7,1018.7 L936.9,1020.7 L937.1,1022.7 L937.3,1024.7 L937.5,1026.7 L937.7,1028.6 L937.9,1030.6 L938.0,1032.6 L938.2,1034.6 L938.4,1036.6 L938.6,1038.6 L938.8,1040.5 L939.0,1042.5 L939.2,1044.5 L939.3,1046.5 L939.5,1048.4 L939.7,1050.4 L939.8,1052.4 L940.0,1054.4 L940.2,1056.3 L940.3,1058.3 L940.5,1060.3 L940.6,1062.3 L940.8,1064.2 L940.9,1066.2 L941.1,1068.2 L941.2,1070.1 L941.4,1072.1 L941.5,1074.1 L941.6,1076.0 L941.8,1078.0 L941.9,1079.9 L942.0,1081.9 L942.1,1083.9 L942.2,1085.8 L942.4,1087.8"/><path d="M937.3,1009.8 L937.3,1008.2 L937.3,1006.5 L937.3,1004.8 L937.4,1003.0 L937.4,1001.3 L937.5,999.5 L937.6,997.6 L937.6,995.8 L937.7,993.9 L937.9,992.0 L938.0,990.0 L938.1,988.1 L938.3,986.1 L938.5,984.1 L938.7,982.1 L938.9,980.1 L939.1,978.0 L939.4,976.0 L939.7,973.9 L939.9,971.8 L940.3,969.8 L940.6,967.7 L940.9,965.6 L941.3,963.5 L941.7,961.3 L942.1,959.2 L942.5,957.1 L943.0,955.0 L943.4,952.9 L943.9,950.8 L944.4,948.7 L945.0,946.6 L945.6,944.5 L946.1,942.5 L946.8,940.4 L947.4,938.4 L948.1,936.3 L948.8,934.3 L949.5,932.3 L950.2,930.3 L951.0,928.4 L951.8,926.4 L952.6,924.5 L953.5,922.6 L954.3,920.8 L955.3,918.9 L956.2,917.1 L957.2,915.3 L958.2,913.6 L959.2,911.9 L960.3,910.2 L961.4,908.5 L962.5,906.9 L963.6,905.4 L964.8,903.8 L966.1,902.3 L967.3,900.9 L968.6,899.5 L969.9,898.1 L971.3,896.8 L972.7,895.6 L974.1,894.4 L975.6,893.2 L977.1,892.1 L978.6,891.0 L980.2,890.0 L981.8,889.1 L983.5,888.2 L985.2,887.4 L986.9,886.7 L988.7,886.0 L990.5,885.3 L992.3,884.8 L994.2,884.3 L996.1,883.8 L998.1,883.5 L1000.0,883.2 L1002.0,882.9 L1004.0,882.7 L1006.0,882.6 L1008.1,882.5 L1010.1,882.6 L1012.2,882.6 L1014.2,882.7 L1016.3,882.9 L1018.3,883.2 L1020.4,883.5 L1022.4,883.8 L1024.4,884.3 L1026.4,884.8 L1028.4,885.3 L1030.4,885.9 L1032.3,886.5 L1034.2,887.3 L1036.1,888.0 L1037.9,888.9 L1039.7,889.7 L1041.4,890.7 L1043.2,891.7 L1044.8,892.7 L1046.4,893.8 L1048.0,895.0 L1049.5,896.2 L1050.9,897.4 L1052.3,898.8 L1053.6,900.1 L1054.8,901.6 L1056.0,903.0 L1057.1,904.6 L1058.1,906.1 L1059.0,907.8 L1059.8,909.4 L1060.5,911.2 L1061.2,912.9 L1061.8,914.7 L1062.4,916.6 L1062.8,918.5 L1063.2,920.4 L1063.5,922.4 L1063.8,924.3 L1064.0,926.4 L1064.2,928.4 L1064.3,930.5 L1064.4,932.6 L1064.4,934.7 L1064.4,936.8 L1064.4,939.0 L1064.3,941.2 L1064.2,943.3 L1064.1,945.5 L1063.9,947.7 L1063.7,949.9 L1063.6,952.1 L1063.4,954.3 L1063.1,956.5 L1062.9,958.7 L1062.7,960.9 L1062.5,963.1 L1062.2,965.3 L1062.0,967.4 L1061.8,969.6 L1061.6,971.7 L1061.4,973.8 L1061.3,975.9 L1061.2,978.0 L1061.0,980.0 L1061.0,982.0 L1060.9,984.0 L1060.9,986.0 L1060.9,987.9 L1060.9,989.8 L1060.9,991.7 L1061.0,993.6 L1061.1,995.4 L1061.2,997.3 L1061.3,999.2 L1061.4,1001.0 L1061.6,1002.9 L1061.7,1004.7 L1061.8,1006.6 L1062.0,1008.5 L1062.1,1010.3 L1062.3,1012.2 L1062.4,1014.1 L1062.6,1016.1 L1062.7,1018.0 L1062.9,1020.0 L1063.0,1022.0 L1063.1,1024.0 L1063.2,1026.1 L1063.4,1028.1 L1063.5,1030.2 L1063.7,1032.2 L1063.9,1034.3 L1064.1,1036.4 L1064.3,1038.4 L1064.5,1040.5 L1064.8,1042.5 L1065.1,1044.6 L1065.5,1046.6 L1065.9,1048.6 L1066.3,1050.6 L1066.8,1052.5 L1067.4,1054.4 L1068.0,1056.3 L1068.7,1058.2 L1069.4,1060.0 L1070.2,1061.8 L1071.0,1063.5 L1072.0,1065.2 L1073.0,1066.9 L1074.1,1068.5 L1075.3,1070.0 L1076.5,1071.5 L1077.9,1072.9 L1079.3,1074.3 L1080.9,1075.5 L1082.5,1076.8 L1084.3,1077.9 L1086.1,1079.0 L1087.9,1080.0 L1089.8,1081.0 L1091.8,1081.8 L1093.8,1082.7 L1095.8,1083.4 L1097.9,1084.1 L1100.0,1084.7 L1102.0,1085.2 L1104.1,1085.7 L1106.1,1086.1 L1108.2,1086.5 L1110.2,1086.8 L1112.2,1087.0 L1114.2,1087.2 L1116.2,1087.3 L1118.2,1087.3 L1120.1,1087.3 L1122.1,1087.3 L1124.0,1087.1 L1125.9,1087.0 L1127.8,1086.7 L1129.7,1086.5 L1131.6,1086.1 L1133.5,1085.7 L1135.4,1085.3 L1137.2,1084.8 L1139.0,1084.3 L1140.9,1083.7 L1142.7,1083.1 L1144.5,1082.5 L1146.3,1081.8 L1148.1,1081.0 L1149.8,1080.2 L1151.6,1079.4 L1153.3,1078.6 L1155.1,1077.7 L1156.8,1076.8 L1158.5,1075.8 L1160.2,1074.8 L1161.9,1073.8 L1163.6,1072.7 L1165.2,1071.6 L1166.9,1070.5 L1168.5,1069.4 L1170.2,1068.2 L1171.8,1067.0 L1173.4,1065.8 L1175.0,1064.5 L1176.6,1063.3 L1178.2,1062.0 L1179.7,1060.7 L1181.3,1059.4 L1182.9,1058.0 L1184.4,1056.7 L1185.9,1055.3 L1187.5,1053.9 L1189.0,1052.5 L1190.5,1051.1 L1192.0,1049.7 L1193.4,1048.3 L1194.9,1046.8 L1196.4,1045.4 L1197.8,1043.9 L1199.3,1042.5 L1200.7,1041.0 L1202.1,1039.5 L1203.5,1038.1 L1205.0,1036.6 L1206.4,1035.1 L1207.7,1033.6 L1209.1,1032.2 L1210.5,1030.7 L1211.8,1029.2 L1213.2,1027.7 L1214.5,1026.2 L1215.8,1024.7 L1217.2,1023.2 L1218.5,1021.6 L1219.7,1020.1 L1221.0,1018.6 L1222.3,1017.0 L1223.5,1015.5 L1224.8,1013.9 L1226.0,1012.4 L1227.2,1010.8 L1228.4,1009.2 L1229.6,1007.6 L1230.8,1006.1 L1232.0,1004.5 L1233.1,1002.8 L1234.3,1001.2 L1235.4,999.6 L1236.5,998.0 L1237.6,996.3 L1238.7,994.7 L1239.8,993.0 L1240.8,991.4 L1241.9,989.7 L1242.9,988.0 L1243.9,986.3 L1244.9,984.6 L1245.9,982.9 L1246.9,981.1 L1247.8,979.4 L1248.8,977.6 L1249.7,975.9 L1250.6,974.1 L1251.5,972.3 L1252.4,970.5 L1253.3,968.7 L1254.1,966.9 L1254.9,965.0 L1255.7,963.2 L1256.5,961.3 L1257.3,959.4 L1258.1,957.6 L1258.8,955.7 L1259.5,953.8 L1260.2,951.8 L1260.9,949.9 L1261.5,948.0 L1262.2,946.1 L1262.7,944.1 L1263.3,942.2 L1263.8,940.2 L1264.3,938.2 L1264.8,936.3 L1265.2,934.3 L1265.6,932.3 L1266.0,930.4 L1266.3,928.4 L1266.5,926.5 L1266.8,924.5 L1267.0,922.5 L1267.1,920.6 L1267.2,918.6 L1267.3,916.7 L1267.3,914.7 L1267.2,912.8 L1267.1,910.8 L1267.0,908.9 L1266.8,907.0 L1266.5,905.1 L1266.2,903.2 L1265.8,901.3 L1265.4,899.5 L1264.9,897.6 L1264.4,895.7 L1263.7,893.9 L1263.1,892.1 L1262.3,890.3 L1261.5,888.5 L1260.6,886.7 L1259.7,885.0 L1258.7,883.2 L1257.6,881.5 L1256.4,879.8 L1255.2,878.2 L1253.9,876.5 L1252.5,874.9 L1251.1,873.3 L1249.7,871.8 L1248.2,870.3 L1246.6,868.8 L1245.0,867.4 L1243.3,866.0 L1241.6,864.6 L1239.9,863.3 L1238.1,862.1 L1236.3,860.9 L1234.5,859.7 L1232.6,858.7 L1230.7,857.6 L1228.8,856.7 L1226.9,855.8 L1225.0,854.9 L1223.0,854.1 L1221.1,853.4 L1219.1,852.8 L1217.1,852.2 L1215.1,851.8 L1213.2,851.4 L1211.2,851.1 L1209.2,850.8 L1207.3,850.7 L1205.3,850.6 L1203.4,850.6 L1201.5,850.8 L1199.6,851.0 L1197.7,851.3 L1195.8,851.7 L1194.0,852.2 L1192.2,852.7 L1190.5,853.4 L1188.8,854.1 L1187.1,854.9 L1185.5,855.8 L1183.9,856.8 L1182.3,857.8 L1180.8,859.0 L1179.4,860.2 L1178.0,861.4 L1176.7,862.7 L1175.4,864.1 L1174.2,865.6 L1173.0,867.1 L1171.9,868.6 L1170.8,870.2 L1169.7,871.9 L1168.8,873.6 L1167.8,875.4 L1166.9,877.2 L1166.1,879.0 L1165.3,880.9 L1164.5,882.8 L1163.8,884.7 L1163.1,886.7 L1162.5,888.7 L1161.9,890.7 L1161.3,892.7 L1160.8,894.8 L1160.3,896.9 L1159.9,899.0 L1159.5,901.1 L1159.1,903.2 L1158.8,905.3 L1158.5,907.4 L1158.3,909.5 L1158.0,911.6 L1157.9,913.7 L1157.7,915.9 L1157.6,917.9 L1157.5,920.0 L1157.4,922.1 L1157.4,924.2 L1157.4,926.2 L1157.5,928.2 L1157.5,930.2 L1157.6,932.2 L1157.7,934.2 L1157.9,936.2 L1158.1,938.2 L1158.3,940.1 L1158.5,942.1 L1158.7,944.0 L1159.0,946.0 L1159.3,947.9 L1159.6,949.8 L1160.0,951.7 L1160.3,953.6 L1160.7,955.5 L1161.1,957.4 L1161.5,959.3 L1162.0,961.2 L1162.4,963.1 L1162.9,965.0 L1163.4,966.9 L1163.9,968.7 L1164.5,970.6 L1165.0,972.5 L1165.6,974.4 L1166.1,976.3 L1166.7,978.1 L1167.3,980.0 L1167.9,981.9 L1168.6,983.8 L1169.2,985.7 L1169.9,987.6 L1170.5,989.4 L1171.2,991.3 L1171.9,993.2 L1172.6,995.1 L1173.3,997.0 L1174.1,998.9 L1174.8,1000.7 L1175.6,1002.6 L1176.4,1004.5 L1177.2,1006.3 L1178.1,1008.1 L1178.9,1010.0 L1179.8,1011.8 L1180.7,1013.6 L1181.7,1015.4 L1182.6,1017.2 L1183.6,1018.9 L1184.6,1020.7 L1185.7,1022.4 L1186.7,1024.1 L1187.8,1025.8 L1189.0,1027.5 L1190.1,1029.1 L1191.3,1030.7 L1192.5,1032.4 L1193.8,1033.9 L1195.0,1035.5 L1196.4,1037.0 L1197.7,1038.5 L1199.1,1040.0 L1200.5,1041.5 L1202.0,1042.9 L1203.5,1044.3 L1205.0,1045.6 L1206.6,1047.0 L1208.1,1048.3 L1209.8,1049.5 L1211.4,1050.8 L1213.1,1052.0 L1214.8,1053.2 L1216.5,1054.3 L1218.2,1055.5 L1219.9,1056.6 L1221.7,1057.6 L1223.5,1058.6 L1225.2,1059.6 L1227.0,1060.6 L1228.8,1061.5 L1230.6,1062.4 L1232.5,1063.3 L1234.3,1064.2 L1236.1,1065.0 L1238.0,1065.8 L1239.8,1066.5 L1241.7,1067.2 L1243.5,1067.9 L1245.4,1068.6 L1247.2,1069.2 L1249.1,1069.8 L1251.0,1070.4 L1252.9,1071.0 L1254.8,1071.5 L1256.7,1072.0 L1258.6,1072.4 L1260.5,1072.9 L1262.4,1073.3 L1264.3,1073.6 L1266.2,1074.0 L1268.2,1074.3 L1270.1,1074.6 L1272.0,1074.9 L1273.9,1075.1 L1275.9,1075.3 L1277.8,1075.5 L1279.7,1075.7 L1281.7,1075.8 L1283.6,1075.9 L1285.6,1076.0 L1287.5,1076.1 L1289.5,1076.1 L1291.4,1076.1 L1293.4,1076.1 L1295.3,1076.0 L1297.3,1076.0 L1299.2,1075.9 L1301.2,1075.7 L1303.1,1075.6 L1305.1,1075.4 L1307.0,1075.2 L1309.0,1075.0 L1310.9,1074.8 L1312.9,1074.5 L1314.8,1074.2 L1316.8,1073.9 L1318.7,1073.6 L1320.7,1073.2 L1322.6,1072.8 L1324.5,1072.4 L1326.5,1072.0 L1328.4,1071.5 L1330.3,1071.1 L1332.3,1070.6 L1334.2,1070.1 L1336.1,1069.5 L1338.0,1069.0 L1339.9,1068.4 L1341.8,1067.8 L1343.7,1067.2 L1345.6,1066.5 L1347.5,1065.8 L1349.4,1065.2 L1351.3,1064.5 L1353.2,1063.7 L1355.0,1063.0 L1356.9,1062.2 L1358.8,1061.4 L1360.6,1060.6 L1362.5,1059.8 L1364.3,1058.9 L1366.1,1058.1 L1368.0,1057.2 L1369.8,1056.3 L1371.6,1055.4 L1373.4,1054.4 L1375.2,1053.5 L1377.0,1052.5 L1378.7,1051.5 L1380.5,1050.5 L1382.3,1049.5 L1384.0,1048.4 L1385.8,1047.4 L1387.5,1046.3 L1389.2,1045.2 L1390.9,1044.1 L1392.6,1043.0 L1394.3,1041.8 L1396.0,1040.6 L1397.7,1039.5 L1399.3,1038.3 L1401.0,1037.1 L1402.6,1035.8 L1404.2,1034.6 L1405.9,1033.3 L1407.5,1032.1 L1409.0,1030.8 L1410.6,1029.5 L1412.2,1028.2 L1413.7,1026.8 L1415.3,1025.5 L1416.8,1024.1 L1418.3,1022.8 L1419.8,1021.4 L1421.3,1020.0 L1422.8,1018.6 L1424.2,1017.1 L1425.7,1015.7 L1427.1,1014.2 L1428.5,1012.8 L1429.9,1011.3 L1431.3,1009.8 L1432.7,1008.3 L1434.0,1006.8 L1435.3,1005.3 L1436.7,1003.7 L1438.0,1002.2 L1439.3,1000.6 L1440.5,999.0 L1441.8,997.4 L1443.0,995.9 L1444.3,994.2 L1445.5,992.6 L1446.7,991.0 L1447.9,989.4 L1449.0,987.7 L1450.2,986.1 L1451.3,984.4 L1452.5,982.7 L1453.6,981.0 L1454.6,979.4 L1455.7,977.7 L1456.8,975.9 L1457.8,974.2 L1458.9,972.5 L1459.9,970.8 L1460.9,969.0 L1461.8,967.3 L1462.8,965.5 L1463.8,963.7 L1464.7,962.0 L1465.6,960.2 L1466.5,958.4 L1467.4,956.6 L1468.3,954.8 L1469.1,953.0 L1470.0,951.2 L1470.8,949.4 L1471.6,947.5 L1472.4,945.7 L1473.2,943.9 L1473.9,942.0 L1474.7,940.2 L1475.4,938.3 L1476.1,936.5 L1476.8,934.6 L1477.5,932.7 L1478.1,930.9 L1478.8,929.0 L1479.4,927.1 L1480.0,925.2 L1480.6,923.3 L1481.2,921.5 L1481.7,919.6 L1482.3,917.7 L1482.8,915.8 L1483.3,913.9 L1483.8,912.0 L1484.3,910.1 L1484.8,908.1 L1485.2,906.2 L1485.7,904.3 L1486.1,902.4 L1486.5,900.5 L1486.8,898.6 L1487.2,896.7 L1487.6,894.7 L1487.9,892.8 L1488.2,890.9 L1488.5,889.0 L1488.8,887.0 L1489.1,885.1 L1489.4,883.2 L1489.6,881.2 L1489.8,879.3 L1490.1,877.4 L1490.3,875.4 L1490.5,873.5 L1490.6,871.5 L1490.8,869.6 L1491.0,867.6 L1491.1,865.7 L1491.2,863.7 L1491.3,861.8 L1491.4,859.8 L1491.5,857.8 L1491.6,855.9 L1491.7,853.9 L1491.7,851.9 L1491.8,850.0 L1491.8,848.0 L1491.9,846.0 L1491.9,844.1 L1491.9,842.1 L1491.9,840.1 L1491.8,838.1 L1491.8,836.1 L1491.8,834.1 L1491.7,832.2 L1491.7,830.2 L1491.6,828.2 L1491.6,826.2 L1491.5,824.2 L1491.4,822.2 L1491.3,820.2 L1491.2,818.2 L1491.1,816.1 L1490.9,814.1 L1490.8,812.1 L1490.7,810.1 L1490.5,808.1 L1490.4,806.1 L1490.2,804.0 L1490.1,802.0 L1489.9,800.0 L1489.7,797.9 L1489.5,795.9 L1489.4,793.9 L1489.2,791.8 L1489.0,789.8 L1488.8,787.8 L1488.6,785.7 L1488.3,783.7 L1488.1,781.6 L1487.9,779.5 L1487.7,777.5 L1487.4,775.4 L1487.2,773.4 L1487.0,771.3 L1486.7,769.2 L1486.5,767.2 L1486.2,765.1 L1485.9,763.0 L1485.6,761.0 L1485.4,758.9 L1485.1,756.9 L1484.8,754.8 L1484.4,752.7 L1484.1,750.7 L1483.8,748.6 L1483.4,746.6 L1483.1,744.6 L1482.7,742.5 L1482.3,740.5 L1481.9,738.5 L1481.5,736.4 L1481.1,734.4 L1480.7,732.4 L1480.2,730.4 L1479.8,728.4 L1479.3,726.4 L1478.8,724.4 L1478.3,722.5 L1477.8,720.5 L1477.2,718.5 L1476.7,716.6 L1476.1,714.7 L1475.5,712.7 L1474.9,710.8 L1474.3,708.9 L1473.6,707.0 L1473.0,705.2 L1472.3,703.3 L1471.6,701.4 L1470.8,699.6 L1470.1,697.8 L1469.3,696.0 L1468.5,694.2 L1467.7,692.4 L1466.8,690.6 L1466.0,688.9 L1465.1,687.1 L1464.2,685.4 L1463.2,683.7 L1462.3,682.0 L1461.3,680.4 L1460.3,678.7 L1459.2,677.1 L1458.2,675.5 L1457.1,673.9 L1456.0,672.3 L1454.8,670.7 L1453.6,669.2 L1452.4,667.7 L1451.2,666.2 L1449.9,664.8 L1448.6,663.3 L1447.3,661.9 L1445.9,660.5 L1444.5,659.1 L1443.1,657.8 L1441.7,656.4 L1440.2,655.1 L1438.6,653.8 L1437.1,652.6 L1435.5,651.4 L1433.9,650.3 L1432.3,649.2 L1430.6,648.2 L1428.9,647.2 L1427.2,646.4 L1425.5,645.6 L1423.7,645.0 L1421.9,644.4 L1420.1,644.0 L1418.3,643.7 L1416.5,643.6 L1414.6,643.6 L1412.8,643.7 L1410.9,644.0 L1409.0,644.5 L1407.1,645.1 L1405.2,645.9 L1403.4,646.8 L1401.5,647.8 L1399.7,648.9 L1398.0,650.1 L1396.3,651.4 L1394.6,652.7 L1393.0,654.1 L1391.5,655.6 L1390.1,657.1 L1388.7,658.6 L1387.4,660.2 L1386.2,661.8 L1385.0,663.5 L1383.9,665.2 L1382.8,666.9 L1381.8,668.7 L1380.8,670.4 L1379.9,672.3 L1379.0,674.1 L1378.2,676.0 L1377.4,677.9 L1376.7,679.8 L1376.0,681.7 L1375.3,683.6 L1374.7,685.6 L1374.1,687.6 L1373.6,689.5 L1373.1,691.5 L1372.6,693.5 L1372.1,695.5 L1371.7,697.5 L1371.3,699.5 L1370.9,701.5 L1370.5,703.5 L1370.2,705.5 L1369.8,707.5 L1369.5,709.4 L1369.2,711.4 L1369.0,713.4 L1368.7,715.4 L1368.5,717.4 L1368.2,719.4 L1368.0,721.4 L1367.8,723.4 L1367.6,725.3 L1367.4,727.3 L1367.3,729.3 L1367.1,731.3 L1366.9,733.3 L1366.8,735.3 L1366.6,737.3 L1366.5,739.3 L1366.4,741.3 L1366.3,743.2 L1366.1,745.2 L1366.0,747.2 L1365.9,749.2 L1365.9,751.2 L1365.8,753.2 L1365.7,755.2 L1365.7,757.2 L1365.6,759.2 L1365.6,761.2 L1365.5,763.2 L1365.5,765.1 L1365.5,767.1 L1365.5,769.1 L1365.5,771.1 L1365.5,773.1 L1365.5,775.1 L1365.5,777.1 L1365.5,779.1 L1365.6,781.1 L1365.6,783.1 L1365.7,785.0 L1365.7,787.0 L1365.8,789.0 L1365.9,791.0 L1366.0,793.0 L1366.1,795.0 L1366.2,797.0 L1366.3,799.0 L1366.4,801.0 L1366.5,802.9 L1366.7,804.9 L1366.8,806.9 L1366.9,808.9 L1367.1,810.9 L1367.3,812.9 L1367.4,814.9 L1367.6,816.8 L1367.8,818.8 L1368.0,820.8 L1368.2,822.8 L1368.4,824.8 L1368.6,826.8 L1368.9,828.7 L1369.1,830.7 L1369.3,832.7 L1369.6,834.7 L1369.8,836.6 L1370.1,838.6 L1370.4,840.6 L1370.7,842.6 L1371.0,844.5 L1371.2,846.5 L1371.5,848.5 L1371.9,850.5 L1372.2,852.4 L1372.5,854.4 L1372.8,856.4 L1373.2,858.3 L1373.5,860.3 L1373.9,862.3 L1374.2,864.2 L1374.6,866.2 L1375.0,868.1 L1375.4,870.1 L1375.8,872.1 L1376.2,874.0 L1376.6,876.0 L1377.0,877.9 L1377.4,879.9 L1377.8,881.8 L1378.3,883.8 L1378.7,885.7 L1379.1,887.7 L1379.6,889.6 L1380.1,891.6 L1380.5,893.5 L1381.0,895.5 L1381.5,897.4 L1382.0,899.4 L1382.5,901.3 L1383.0,903.2 L1383.5,905.2 L1384.0,907.1 L1384.6,909.0 L1385.1,911.0 L1385.6,912.9 L1386.2,914.8 L1386.7,916.8 L1387.3,918.7 L1387.9,920.6 L1388.4,922.5 L1389.0,924.4 L1389.6,926.4 L1390.2,928.3 L1390.8,930.2 L1391.4,932.1 L1392.0,934.0 L1392.7,935.9 L1393.3,937.8 L1393.9,939.7 L1394.6,941.6 L1395.2,943.5 L1395.9,945.4 L1396.5,947.3 L1397.2,949.2 L1397.9,951.1 L1398.6,953.0 L1399.3,954.9 L1400.0,956.8 L1400.7,958.7 L1401.4,960.6 L1402.1,962.4 L1402.8,964.3 L1403.5,966.2 L1404.3,968.1 L1405.0,969.9 L1405.8,971.8 L1406.5,973.7 L1407.3,975.5 L1408.1,977.4 L1408.8,979.2 L1409.6,981.1 L1410.4,982.9 L1411.2,984.8 L1412.1,986.6 L1412.9,988.4 L1413.7,990.3 L1414.6,992.1 L1415.4,993.9 L1416.3,995.7 L1417.2,997.5 L1418.1,999.3 L1419.0,1001.1 L1419.9,1002.8 L1420.9,1004.6 L1421.8,1006.4 L1422.8,1008.1 L1423.8,1009.9 L1424.8,1011.6 L1425.8,1013.3 L1426.8,1015.1 L1427.8,1016.8 L1428.9,1018.5 L1429.9,1020.1 L1431.0,1021.8 L1432.1,1023.5 L1433.2,1025.1 L1434.4,1026.8 L1435.5,1028.4 L1436.7,1030.0 L1437.9,1031.6 L1439.1,1033.2 L1440.3,1034.8 L1441.6,1036.4 L1442.8,1037.9 L1444.1,1039.5 L1445.4,1041.0 L1446.7,1042.5 L1448.1,1044.0 L1449.4,1045.5 L1450.8,1047.0 L1452.2,1048.4 L1453.7,1049.9 L1455.1,1051.3 L1456.6,1052.7 L1458.1,1054.1 L1459.6,1055.4 L1461.2,1056.8 L1462.7,1058.1 L1464.3,1059.5 L1465.9,1060.7 L1467.6,1062.0 L1469.2,1063.2 L1470.9,1064.5 L1472.6,1065.6 L1474.3,1066.8 L1476.0,1067.9 L1477.8,1068.9 L1479.6,1069.9 L1481.3,1070.9 L1483.1,1071.8 L1484.9,1072.6 L1486.7,1073.4 L1488.6,1074.2 L1490.4,1074.8 L1492.3,1075.5 L1494.1,1076.0 L1496.0,1076.5 L1497.9,1076.9 L1499.8,1077.2 L1501.6,1077.5 L1503.5,1077.6 L1505.4,1077.7 L1507.3,1077.7 L1509.2,1077.7 L1511.2,1077.6 L1513.1,1077.4 L1515.0,1077.1 L1516.9,1076.8 L1518.8,1076.4 L1520.7,1076.0 L1522.6,1075.5 L1524.5,1074.9 L1526.3,1074.3 L1528.2,1073.6 L1530.1,1072.8 L1531.9,1072.1 L1533.8,1071.2 L1535.6,1070.3 L1537.4,1069.4 L1539.3,1068.4 L1541.0,1067.4 L1542.8,1066.3 L1544.6,1065.2 L1546.3,1064.0 L1548.1,1062.8 L1549.8,1061.6 L1551.5,1060.3 L1553.1,1059.0 L1554.8,1057.7 L1556.4,1056.3 L1558.0,1054.9 L1559.6,1053.5 L1561.1,1052.0 L1562.7,1050.6 L1564.1,1049.1 L1565.6,1047.6 L1567.0,1046.0 L1568.4,1044.5 L1569.8,1042.9 L1571.2,1041.4 L1572.5,1039.8 L1573.7,1038.2 L1575.0,1036.5 L1576.2,1034.9 L1577.4,1033.3 L1578.5,1031.6 L1579.6,1030.0 L1580.7,1028.3 L1581.8,1026.7 L1582.8,1025.0 L1583.9,1023.3 L1584.9,1021.6 L1585.8,1019.9 L1586.8,1018.2 L1587.7,1016.5 L1588.7,1014.7 L1589.6,1013.0 L1590.5,1011.3 L1591.4,1009.5 L1592.3,1007.8 L1593.1,1006.0 L1594.0,1004.2 L1594.8,1002.5 L1595.7,1000.7 L1596.5,998.9 L1597.3,997.2 L1598.2,995.4 L1599.0,993.6 L1599.8,991.8 L1600.7,990.0 L1601.5,988.2 L1602.3,986.4 L1603.2,984.7 L1604.0,982.9 L1604.9,981.1 L1605.7,979.3 L1606.6,977.5 L1607.4,975.7 L1608.3,973.9 L1609.1,972.1 L1610.0,970.3 L1610.8,968.4 L1611.7,966.6 L1612.5,964.8 L1613.4,963.0 L1614.3,961.2 L1615.1,959.4 L1616.0,957.6 L1616.8,955.7 L1617.7,953.9 L1618.5,952.1 L1619.4,950.3 L1620.2,948.5 L1621.1,946.6 L1621.9,944.8 L1622.8,943.0 L1623.6,941.1 L1624.5,939.3 L1625.3,937.5 L1626.1,935.6 L1626.9,933.8 L1627.8,931.9 L1628.6,930.1 L1629.4,928.2 L1630.2,926.4 L1631.0,924.5 L1631.8,922.7 L1632.6,920.8 L1633.4,919.0 L1634.2,917.1 L1635.0,915.3 L1635.7,913.4 L1636.5,911.5 L1637.2,909.7 L1638.0,907.8 L1638.7,905.9 L1639.5,904.1 L1640.2,902.2 L1640.9,900.3 L1641.6,898.4 L1642.3,896.5 L1643.0,894.7 L1643.7,892.8 L1644.4,890.9 L1645.0,889.0 L1645.7,887.1 L1646.3,885.2 L1647.0,883.3 L1647.6,881.4 L1648.2,879.5 L1648.8,877.6 L1649.4,875.7 L1650.0,873.8 L1650.5,871.9 L1651.1,870.0 L1651.6,868.1 L1652.2,866.2 L1652.7,864.3 L1653.2,862.4 L1653.7,860.4 L1654.1,858.5 L1654.6,856.6 L1655.1,854.7 L1655.5,852.7 L1655.9,850.8 L1656.4,848.9 L1656.8,846.9 L1657.2,845.0 L1657.5,843.1 L1657.9,841.1 L1658.3,839.2 L1658.6,837.2 L1659.0,835.3 L1659.3,833.4 L1659.6,831.4 L1660.0,829.4 L1660.3,827.5 L1660.6,825.5 L1660.9,823.6 L1661.1,821.6 L1661.4,819.7 L1661.7,817.7 L1661.9,815.7 L1662.2,813.8 L1662.4,811.8 L1662.7,809.8 L1662.9,807.8 L1663.1,805.9 L1663.4,803.9 L1663.6,801.9 L1663.8,799.9 L1664.0,797.9 L1664.2,795.9 L1664.4,794.0 L1664.5,792.0 L1664.7,790.0 L1664.9,788.0 L1665.1,786.0 L1665.2,784.0 L1665.4,782.0 L1665.6,780.0 L1665.7,778.0 L1665.9,776.0 L1666.0,774.0 L1666.2,772.0 L1666.3,769.9 L1666.5,767.9 L1666.6,765.9 L1666.7,763.9 L1666.9,761.9 L1667.0,759.9 L1667.2,757.8 L1667.3,755.8 L1667.4,753.8 L1667.6,751.8 L1667.7,749.7 L1667.8,747.7 L1667.9,745.7 L1668.1,743.6 L1668.2,741.6 L1668.3,739.5 L1668.4,737.5 L1668.6,735.5 L1668.7,733.4 L1668.8,731.4 L1668.8,729.4 L1668.9,727.3 L1669.0,725.3 L1669.0,723.3 L1669.1,721.2 L1669.1,719.2 L1669.1,717.2 L1669.1,715.1 L1669.1,713.1 L1669.1,711.1 L1669.0,709.1 L1668.9,707.1 L1668.8,705.1 L1668.7,703.1 L1668.6,701.1 L1668.4,699.1 L1668.2,697.1 L1668.0,695.1 L1667.8,693.1 L1667.5,691.2 L1667.2,689.2 L1666.9,687.2 L1666.5,685.3 L1666.1,683.3 L1665.7,681.4 L1665.3,679.5 L1664.8,677.6 L1664.3,675.6 L1663.7,673.7 L1663.1,671.8 L1662.5,670.0 L1661.8,668.1 L1661.1,666.2 L1660.4,664.4 L1659.6,662.5 L1658.7,660.7 L1657.9,658.8 L1656.9,657.0 L1656.0,655.2 L1655.0,653.4 L1653.9,651.7 L1652.8,649.9 L1651.6,648.1 L1650.4,646.4 L1649.2,644.7 L1647.9,642.9 L1646.5,641.2 L1645.1,639.6 L1643.6,638.0 L1642.1,636.4 L1640.6,634.9 L1639.1,633.4 L1637.5,632.1 L1635.8,630.8 L1634.2,629.6 L1632.5,628.4 L1630.8,627.4 L1629.1,626.5 L1627.3,625.8 L1625.6,625.1 L1623.8,624.6 L1622.1,624.2 L1620.3,624.0 L1618.5,624.0 L1616.7,624.1 L1614.9,624.4 L1613.2,624.8 L1611.4,625.4 L1609.6,626.1 L1607.9,626.9 L1606.2,627.9 L1604.5,629.0 L1602.8,630.2 L1601.1,631.5 L1599.5,632.9 L1598.0,634.3 L1596.4,635.8 L1594.9,637.4 L1593.5,639.1 L1592.1,640.7 L1590.7,642.5 L1589.4,644.2 L1588.2,646.0 L1587.0,647.8 L1585.9,649.5 L1584.9,651.3 L1583.9,653.2 L1583.0,655.0 L1582.1,656.8 L1581.2,658.7 L1580.4,660.6 L1579.7,662.4 L1579.0,664.3 L1578.4,666.2 L1577.8,668.1 L1577.2,670.0 L1576.7,672.0 L1576.2,673.9 L1575.8,675.8 L1575.3,677.8 L1575.0,679.7 L1574.6,681.7 L1574.3,683.7 L1574.0,685.6 L1573.8,687.6 L1573.5,689.6 L1573.3,691.6 L1573.1,693.6 L1572.9,695.6 L1572.8,697.6 L1572.7,699.6 L1572.5,701.6 L1572.4,703.6 L1572.3,705.7 L1572.3,707.7 L1572.2,709.7 L1572.1,711.7 L1572.1,713.7 L1572.0,715.8 L1571.9,717.8 L1571.9,719.8 L1571.8,721.8 L1571.8,723.8 L1571.8,725.9 L1571.7,727.9 L1571.7,729.9 L1571.6,731.9 L1571.6,734.0 L1571.6,736.0 L1571.6,738.0 L1571.6,740.0 L1571.5,742.1 L1571.5,744.1 L1571.5,746.1 L1571.5,748.1 L1571.5,750.2 L1571.5,752.2 L1571.5,754.2 L1571.5,756.2 L1571.5,758.2 L1571.5,760.3 L1571.6,762.3 L1571.6,764.3 L1571.6,766.3 L1571.6,768.4 L1571.7,770.4 L1571.7,772.4 L1571.7,774.4 L1571.8,776.4 L1571.8,778.5 L1571.9,780.5 L1571.9,782.5 L1572.0,784.5 L1572.1,786.5 L1572.1,788.5 L1572.2,790.6 L1572.3,792.6 L1572.3,794.6 L1572.4,796.6 L1572.5,798.6 L1572.6,800.6 L1572.7,802.6 L1572.8,804.7 L1572.9,806.7 L1573.0,808.7 L1573.1,810.7 L1573.2,812.7 L1573.3,814.7 L1573.4,816.7 L1573.6,818.7 L1573.7,820.7 L1573.8,822.7 L1574.0,824.7 L1574.1,826.7 L1574.2,828.7 L1574.4,830.7 L1574.5,832.7 L1574.7,834.7 L1574.9,836.7 L1575.0,838.7 L1575.2,840.7 L1575.4,842.7 L1575.6,844.7 L1575.7,846.7 L1575.9,848.7 L1576.1,850.7 L1576.3,852.6 L1576.5,854.6 L1576.7,856.6 L1576.9,858.6 L1577.2,860.6 L1577.4,862.6 L1577.6,864.5 L1577.8,866.5 L1578.1,868.5 L1578.3,870.5 L1578.5,872.4 L1578.8,874.4 L1579.0,876.4 L1579.3,878.3 L1579.6,880.3 L1579.8,882.3 L1580.1,884.2 L1580.4,886.2 L1580.7,888.1 L1580.9,890.1 L1581.2,892.0 L1581.5,894.0 L1581.8,895.9 L1582.1,897.9 L1582.5,899.8 L1582.8,901.8 L1583.1,903.7 L1583.4,905.7 L1583.7,907.6 L1584.1,909.5 L1584.4,911.5 L1584.8,913.4 L1585.1,915.3 L1585.5,917.3 L1585.8,919.2 L1586.2,921.1 L1586.6,923.1 L1587.0,925.0 L1587.3,926.9 L1587.7,928.8 L1588.1,930.7 L1588.5,932.7 L1589.0,934.6 L1589.4,936.5 L1589.8,938.4 L1590.2,940.3 L1590.7,942.2 L1591.1,944.2 L1591.6,946.1 L1592.0,948.0 L1592.5,949.9 L1593.0,951.8 L1593.4,953.7 L1593.9,955.7 L1594.4,957.6 L1594.9,959.5 L1595.4,961.4 L1596.0,963.3 L1596.5,965.2 L1597.0,967.2 L1597.6,969.1 L1598.1,971.0 L1598.7,972.9 L1599.3,974.8 L1599.8,976.8 L1600.4,978.7 L1601.0,980.6 L1601.6,982.6 L1602.2,984.5 L1602.9,986.4 L1603.5,988.3 L1604.1,990.3 L1604.8,992.2 L1605.5,994.2 L1606.1,996.1 L1606.8,998.0 L1607.5,1000.0 L1608.2,1001.9 L1608.9,1003.9 L1609.6,1005.8 L1610.4,1007.8 L1611.1,1009.8 L1611.9,1011.7 L1612.6,1013.7 L1613.4,1015.7 L1614.2,1017.6 L1615.0,1019.6 L1615.8,1021.6 L1616.6,1023.6 L1617.4,1025.6 L1618.3,1027.5 L1619.1,1029.5 L1620.0,1031.5 L1620.9,1033.5 L1621.8,1035.5 L1622.7,1037.4 L1623.6,1039.4 L1624.6,1041.3 L1625.6,1043.2 L1626.5,1045.0 L1627.6,1046.9 L1628.6,1048.7 L1629.6,1050.5 L1630.7,1052.2 L1631.8,1053.9 L1632.9,1055.6 L1634.1,1057.2 L1635.3,1058.7 L1636.5,1060.2 L1637.7,1061.7 L1639.0,1063.1 L1640.3,1064.4 L1641.6,1065.6 L1643.0,1066.8 L1644.4,1068.0 L1645.8,1069.0 L1647.3,1070.0 L1648.8,1070.9 L1650.3,1071.7 L1651.9,1072.4 L1653.5,1073.0 L1655.2,1073.5 L1656.9,1074.0 L1658.6,1074.3 L1660.4,1074.6 L1662.2,1074.7 L1664.1,1074.7 L1666.0,1074.6 L1667.9,1074.5 L1669.8,1074.2 L1671.8,1073.8 L1673.8,1073.4 L1675.8,1072.8 L1677.7,1072.2 L1679.7,1071.5 L1681.6,1070.8 L1683.6,1070.0 L1685.4,1069.1 L1687.3,1068.1 L1689.1,1067.1 L1690.9,1066.1 L1692.6,1065.0 L1694.2,1063.8 L1695.8,1062.6 L1697.4,1061.4 L1698.9,1060.1 L1700.3,1058.7 L1701.7,1057.4 L1703.0,1056.0 L1704.3,1054.5 L1705.5,1053.0 L1706.7,1051.5 L1707.8,1049.9 L1708.9,1048.3 L1709.9,1046.7 L1710.9,1045.0 L1711.8,1043.3 L1712.7,1041.6 L1713.5,1039.9 L1714.3,1038.1 L1715.1,1036.3 L1715.8,1034.5 L1716.4,1032.6 L1717.1,1030.7 L1717.7,1028.8 L1718.2,1026.9 L1718.7,1025.0 L1719.2,1023.0 L1719.7,1021.1 L1720.1,1019.1 L1720.5,1017.1 L1720.8,1015.0 L1721.2,1013.0 L1721.5,1011.0 L1721.8,1008.9 L1722.1,1006.8 L1722.3,1004.7 L1722.6,1002.6 L1722.8,1000.5 L1723.0,998.4 L1723.2,996.3 L1723.4,994.2 L1723.6,992.1 L1723.7,990.0 L1723.9,987.8 L1724.1,985.7 L1724.2,983.6 L1724.4,981.5 L1724.5,979.3 L1724.7,977.2 L1724.8,975.1 L1725.0,973.0 L1725.2,970.9 L1725.4,968.8 L1725.6,966.7 L1725.8,964.6 L1726.0,962.5 L1726.2,960.5 L1726.5,958.4 L1726.7,956.4 L1727.0,954.4 L1727.3,952.4 L1727.6,950.4 L1728.0,948.4 L1728.4,946.5 L1728.8,944.5 L1729.2,942.6 L1729.7,940.7 L1730.1,938.8 L1730.7,937.0 L1731.2,935.2 L1731.8,933.4 L1732.5,931.6 L1733.2,929.8 L1733.9,928.1 L1734.6,926.4 L1735.4,924.8 L1736.3,923.1 L1737.2,921.5 L1738.2,920.0 L1739.2,918.5 L1740.2,917.0 L1741.3,915.5 L1742.5,914.1 L1743.7,912.7 L1744.9,911.3 L1746.2,910.0 L1747.6,908.7 L1748.9,907.4 L1750.4,906.2 L1751.8,905.0 L1753.4,903.9 L1754.9,902.7 L1756.5,901.6 L1758.1,900.6 L1759.8,899.5 L1761.4,898.5 L1763.2,897.5 L1764.9,896.6 L1766.7,895.7 L1768.5,894.8 L1770.4,893.9 L1772.2,893.1 L1774.1,892.3 L1776.0,891.5 L1778.0,890.8 L1780.0,890.1 L1781.9,889.4 L1783.9,888.7 L1786.0,888.1 L1788.0,887.5 L1790.1,886.9 L1792.1,886.3 L1794.2,885.8 L1796.3,885.3 L1798.4,884.8 L1800.6,884.3 L1802.7,883.9 L1804.8,883.5 L1807.0,883.1 L1809.1,882.7 L1811.3,882.4 L1813.4,882.1 L1815.6,881.8 L1817.7,881.5 L1819.9,881.3 L1822.0,881.1 L1824.2,880.9 L1826.4,880.7 L1828.5,880.5 L1830.6,880.4 L1832.8,880.2 L1834.9,880.1 L1837.0,880.1 L1839.1,880.0 L1841.2,880.0 L1843.3,879.9 L1845.3,879.9 L1847.4,880.0 L1849.4,880.0 L1851.4,880.1 L1853.4,880.2 L1855.3,880.3 L1857.3,880.5 L1859.2,880.7 L1861.1,880.9 L1862.9,881.2 L1864.7,881.6 L1866.5,882.0 L1868.3,882.5 L1870.0,883.0 L1871.7,883.6 L1873.3,884.3 L1874.9,885.0 L1876.5,885.8 L1878.0,886.7 L1879.5,887.7 L1880.9,888.8 L1882.3,889.9 L1883.6,891.1 L1884.9,892.4 L1886.2,893.8 L1887.4,895.2 L1888.6,896.7 L1889.7,898.2 L1890.8,899.8 L1891.8,901.5 L1892.8,903.2 L1893.8,904.9 L1894.7,906.7 L1895.6,908.6 L1896.5,910.4 L1897.3,912.4 L1898.1,914.3 L1898.9,916.3 L1899.6,918.3 L1900.3,920.4 L1900.9,922.4 L1901.5,924.5 L1902.1,926.6 L1902.7,928.7 L1903.2,930.8 L1903.7,933.0 L1904.2,935.1 L1904.6,937.2 L1905.0,939.4 L1905.4,941.5 L1905.7,943.6 L1906.0,945.7 L1906.3,947.8 L1906.6,949.9 L1906.8,952.0 L1907.1,954.1 L1907.2,956.2 L1907.4,958.2 L1907.5,960.3 L1907.6,962.3 L1907.7,964.4 L1907.8,966.4 L1907.8,968.5 L1907.8,970.5 L1907.7,972.5 L1907.6,974.5 L1907.5,976.5 L1907.4,978.5 L1907.2,980.5 L1907.1,982.4 L1906.8,984.4 L1906.6,986.4 L1906.3,988.3 L1906.0,990.3 L1905.6,992.2 L1905.3,994.2 L1904.8,996.1 L1904.4,998.0 L1903.9,1000.0 L1903.4,1001.9 L1902.9,1003.8 L1902.3,1005.7 L1901.7,1007.6 L1901.1,1009.5 L1900.4,1011.4 L1899.7,1013.3 L1899.0,1015.2 L1898.2,1017.0 L1897.4,1018.9 L1896.6,1020.7 L1895.8,1022.6 L1894.9,1024.4 L1893.9,1026.2 L1893.0,1028.0 L1892.0,1029.7 L1891.0,1031.5 L1889.9,1033.2 L1888.8,1034.9 L1887.7,1036.6 L1886.5,1038.3 L1885.4,1040.0 L1884.1,1041.6 L1882.9,1043.2 L1881.6,1044.8 L1880.3,1046.3 L1878.9,1047.9 L1877.5,1049.4 L1876.1,1050.8 L1874.7,1052.3 L1873.2,1053.7 L1871.7,1055.1 L1870.1,1056.5 L1868.5,1057.8 L1866.9,1059.1 L1865.2,1060.3 L1863.6,1061.6 L1861.8,1062.8 L1860.1,1063.9 L1858.3,1065.0 L1856.5,1066.1 L1854.7,1067.1 L1852.9,1068.1 L1851.0,1069.0 L1849.1,1069.9 L1847.3,1070.7 L1845.3,1071.5 L1843.4,1072.2 L1841.5,1072.9 L1839.5,1073.5 L1837.6,1074.0 L1835.6,1074.5 L1833.7,1074.9 L1831.7,1075.3 L1829.7,1075.6 L1827.8,1075.8 L1825.8,1075.9 L1823.8,1076.0 L1821.9,1076.0 L1819.9,1076.0 L1818.0,1075.8 L1816.0,1075.6 L1814.1,1075.3 L1812.2,1074.9 L1810.3,1074.5 L1808.4,1074.0 L1806.5,1073.4 L1804.6,1072.8 L1802.8,1072.1 L1800.9,1071.4 L1799.1,1070.6 L1797.3,1069.7 L1795.4,1068.8 L1793.6,1067.9 L1791.8,1066.9 L1790.0,1065.9 L1788.2,1064.8 L1786.5,1063.8 L1784.7,1062.6 L1783.0,1061.5 L1781.2,1060.3 L1779.5,1059.1 L1777.8,1057.9 L1776.1,1056.7 L1774.4,1055.4 L1772.7,1054.2 L1771.0,1052.9 L1769.4,1051.6 L1767.7,1050.3 L1766.1,1049.1 L1764.5,1047.8 L1762.9,1046.5 L1761.3,1045.1 L1759.7,1043.8 L1758.2,1042.5 L1756.7,1041.1 L1755.1,1039.8 L1753.7,1038.4 L1752.2,1037.0 L1750.8,1035.6 L1749.4,1034.2 L1748.0,1032.8 L1746.6,1031.3 L1745.3,1029.9 L1744.0,1028.4 L1742.8,1026.9 L1741.5,1025.3 L1740.4,1023.8 L1739.2,1022.2 L1738.1,1020.6 L1737.0,1019.0 L1736.0,1017.3 L1735.0,1015.7 L1734.0,1014.0 L1733.1,1012.2 L1732.3,1010.5 L1731.4,1008.7 L1730.6,1006.9 L1729.9,1005.1 L1729.2,1003.2 L1728.6,1001.3 L1727.9,999.5 L1727.4,997.5 L1726.8,995.6 L1726.4,993.7 L1725.9,991.7 L1725.5,989.8 L1725.1,987.8 L1724.8,985.8 L1724.5,983.8 L1724.3,981.8 L1724.1,979.7 L1723.9,977.7 L1723.8,975.7 L1723.7,973.6 L1723.7,971.6 L1723.7,969.5 L1723.8,967.5 L1723.8,965.4 L1724.0,963.4 L1724.1,961.3 L1724.4,959.3 L1724.6,957.2 L1724.9,955.2 L1725.2,953.1 L1725.6,951.1 L1726.0,949.1 L1726.4,947.1 L1726.9,945.0 L1727.5,943.0 L1728.0,941.1 L1728.6,939.1 L1729.3,937.1 L1730.0,935.2 L1730.7,933.2 L1731.5,931.3 L1732.3,929.4 L1733.1,927.6 L1734.0,925.7 L1734.9,923.9 L1735.9,922.0 L1736.9,920.3 L1737.9,918.5 L1739.0,916.8 L1740.1,915.0 L1741.2,913.3 L1742.4,911.7 L1743.7,910.1 L1744.9,908.5 L1746.2,906.9 L1747.6,905.4 L1748.9,903.9 L1750.3,902.4 L1751.8,900.9 L1753.3,899.5 L1754.8,898.2 L1756.3,896.8 L1757.9,895.5 L1759.5,894.3 L1761.1,893.0 L1762.7,891.8 L1764.4,890.7 L1766.1,889.5 L1767.8,888.4 L1769.5,887.4 L1771.2,886.4 L1773.0,885.4 L1774.8,884.4 L1776.6,883.5 L1778.4,882.7 L1780.2,881.9 L1782.1,881.1 L1783.9,880.3 L1785.8,879.6 L1787.7,878.9 L1789.5,878.3 L1791.4,877.7 L1793.3,877.2 L1795.2,876.7 L1797.1,876.2 L1799.0,875.8 L1800.9,875.4 L1802.8,875.0 L1804.8,874.7 L1806.7,874.4 L1808.6,874.2 L1810.6,873.9 L1812.5,873.7 L1814.5,873.6 L1816.4,873.4 L1818.4,873.3 L1820.4,873.3 L1822.3,873.2 L1824.3,873.2 L1826.3,873.2 L1828.3,873.2 L1830.3,873.3 L1832.3,873.4 L1834.3,873.5 L1836.3,873.6 L1838.3,873.8 L1840.3,873.9 L1842.3,874.1 L1844.3,874.3 L1846.3,874.6 L1848.3,874.8 L1850.3,875.1 L1852.4,875.3 L1854.4,875.6 L1856.4,875.9 L1858.4,876.3 L1860.5,876.6 L1862.5,876.9 L1864.5,877.3 L1866.6,877.7 L1868.6,878.0 L1870.6,878.4 L1872.7,878.8 L1874.7,879.2 L1876.8,879.6 L1878.8,880.0 L1880.8,880.4 L1882.9,880.8 L1884.9,881.3 L1887.0,881.7 L1889.0,882.1 L1891.0,882.5 L1893.1,883.0 L1895.1,883.4 L1897.1,883.8 L1899.2,884.2 L1901.2,884.7 L1903.2,885.1 L1905.3,885.5 L1907.3,885.9 L1909.3,886.3 L1911.4,886.7 L1913.4,887.0 L1915.4,887.4 L1917.4,887.8 L1919.4,888.1 L1921.5,888.5 L1923.5,888.8 L1925.5,889.1 L1927.5,889.4 L1929.5,889.7 L1931.5,890.0 L1933.5,890.2 L1935.5,890.5 L1937.5,890.7 L1939.4,890.9 L1941.4,891.1 L1943.4,891.2 L1945.4,891.4 L1947.3,891.5 L1949.3,891.6 L1951.3,891.7 L1953.2,891.7 L1955.2,891.7 L1957.1,891.7 L1959.0,891.7 L1961.0,891.7 L1962.9,891.6 L1964.8,891.5 L1966.7,891.3 L1968.6,891.2 L1970.5,891.0 L1972.4,890.7 L1974.3,890.5 L1976.2,890.2 L1978.1,889.8 L1980.0,889.5 L1981.8,889.1 L1983.7,888.6 L1985.5,888.2 L1987.4,887.7 L1989.2,887.1 L1991.0,886.6 L1992.9,886.0 L1994.7,885.4 L1996.5,884.7 L1998.3,884.1 L2000.1,883.4 L2001.9,882.6 L2003.7,881.9 L2005.4,881.1 L2007.2,880.3 L2009.0,879.5 L2010.7,878.6 L2012.5,877.7 L2014.2,876.8 L2016.0,875.9 L2017.7,874.9 L2019.4,874.0 L2021.1,873.0 L2022.9,871.9 L2024.6,870.9 L2026.3,869.8 L2028.0,868.8 L2029.7,867.7 L2031.3,866.6 L2033.0,865.4 L2034.7,864.3 L2036.3,863.1 L2038.0,861.9 L2039.7,860.7 L2041.3,859.5 L2042.9,858.3 L2044.6,857.0 L2046.2,855.8 L2047.8,854.5 L2049.4,853.2 L2051.1,851.9 L2052.7,850.6 L2054.3,849.3 L2055.9,847.9 L2057.4,846.6 L2059.0,845.2 L2060.6,843.9 L2062.2,842.5 L2063.7,841.1 L2065.3,839.7 L2066.8,838.3 L2068.4,836.9 L2069.9,835.5 L2071.5,834.1 L2073.0,832.7 L2074.5,831.2 L2076.0,829.8 L2077.5,828.4 L2079.0,826.9 L2080.5,825.5 L2082.0,824.0 L2083.5,822.6 L2085.0,821.1 L2086.5,819.7 L2088.0,818.2 L2089.4,816.8 L2090.9,815.3 L2092.3,813.9 L2093.8,812.4 L2095.2,811.0 L2096.7,809.5 L2098.1,808.1 L2099.5,806.6 L2101.0,805.2 L2102.4,803.8 L2103.8,802.4 L2105.2,800.9 L2106.6,799.5 L2108.0,798.1 L2109.4,796.7 L2110.8,795.3 L2112.1,793.9 L2113.5,792.6 L2114.9,791.2 L2116.3,789.8 L2117.6,788.5 L2119.0,787.2 L2120.3,785.8 L2121.7,784.5 L2123.0,783.2 L2124.3,781.9 L2125.7,780.7 L2127.0,779.4 L2128.3,778.1"/>
</g>
<text x="86.30" y="104.20" font-size="18.60" fill="#FFF1EA" stroke="#b9482b" stroke-width="0.15" textLength="79.84" lengthAdjust="spacingAndGlyphs">AutoSave</text>
<text x="185.70" y="102.30" font-size="14.20" fill="#1a1a1a" stroke="#ffffff" stroke-width="0.1" textLength="20.36" lengthAdjust="spacingAndGlyphs">On</text>
<text x="592.87" y="104.70" font-size="19.90" fill="#FFF1EA" stroke="#b9482b" stroke-width="0.15" textLength="215.69" lengthAdjust="spacingAndGlyphs">Hello - Saved to OneDrive</text>
<text x="1077.80" y="106.00" font-size="18.00" fill="#2B1A14" stroke="#f9c8b4" stroke-width="0.2" textLength="55.18" lengthAdjust="spacingAndGlyphs">Search</text>
<text x="83.09" y="164.40" font-size="21.70" fill="#111111" stroke="#f1f1f1" stroke-width="0.3" textLength="31.97" lengthAdjust="spacingAndGlyphs">File</text>
<text x="170.98" y="164.40" font-size="21.70" fill="#111111" stroke="#f1f1f1" stroke-width="0.3" textLength="59.08" lengthAdjust="spacingAndGlyphs">Home</text>
<text x="280.01" y="164.40" font-size="21.70" fill="#111111" stroke="#f1f1f1" stroke-width="0.3" textLength="54.02" lengthAdjust="spacingAndGlyphs">Insert</text>
<text x="382.98" y="164.40" font-size="21.70" fill="#1a1a1a" stroke="#1a1a1a" stroke-width="0.6" textLength="51.68" lengthAdjust="spacingAndGlyphs">Draw</text>
<text x="482.99" y="164.40" font-size="21.70" fill="#111111" stroke="#f1f1f1" stroke-width="0.3" textLength="68.08" lengthAdjust="spacingAndGlyphs">Design</text>
<text x="602.00" y="164.40" font-size="21.70" fill="#111111" stroke="#f1f1f1" stroke-width="0.3" textLength="101.85" lengthAdjust="spacingAndGlyphs">Transitions</text>
<text x="758.50" y="164.40" font-size="21.70" fill="#111111" stroke="#f1f1f1" stroke-width="0.3" textLength="108.34" lengthAdjust="spacingAndGlyphs">Animations</text>
<text x="920.60" y="164.40" font-size="21.70" fill="#111111" stroke="#f1f1f1" stroke-width="0.3" textLength="105.07" lengthAdjust="spacingAndGlyphs">Slide Show</text>
<text x="1076.05" y="164.40" font-size="21.70" fill="#111111" stroke="#f1f1f1" stroke-width="0.3" textLength="67.63" lengthAdjust="spacingAndGlyphs">Review</text>
<text x="1191.50" y="164.40" font-size="21.70" fill="#111111" stroke="#f1f1f1" stroke-width="0.3" textLength="46.17" lengthAdjust="spacingAndGlyphs">View</text>
<text x="1284.48" y="164.40" font-size="21.70" fill="#111111" stroke="#f1f1f1" stroke-width="0.3" textLength="45.58" lengthAdjust="spacingAndGlyphs">Help</text>
<text x="754.43" y="268.40" font-size="19.50" fill="#111111" stroke="#f1f1f1" stroke-width="0.3" textLength="91.47" lengthAdjust="spacingAndGlyphs">Draw with</text>
<text x="774.00" y="296.70" font-size="19.50" fill="#111111" stroke="#f1f1f1" stroke-width="0.3" textLength="53.87" lengthAdjust="spacingAndGlyphs">Touch</text>
<text x="889.16" y="263.60" font-size="19.50" fill="#111111" stroke="#f1f1f1" stroke-width="0.3" textLength="48.51" lengthAdjust="spacingAndGlyphs">Ruler</text>
<text x="991.28" y="262.90" font-size="19.50" fill="#111111" stroke="#f1f1f1" stroke-width="0.3" textLength="53.55" lengthAdjust="spacingAndGlyphs">Ink to</text>
<text x="1001.00" y="292.40" font-size="19.50" fill="#111111" stroke="#f1f1f1" stroke-width="0.3" textLength="35.13" lengthAdjust="spacingAndGlyphs">Text</text>
<text x="1065.85" y="262.90" font-size="19.50" fill="#111111" stroke="#f1f1f1" stroke-width="0.3" textLength="54.77" lengthAdjust="spacingAndGlyphs">Ink to</text>
<text x="1065.50" y="292.40" font-size="19.50" fill="#111111" stroke="#f1f1f1" stroke-width="0.3" textLength="58.37" lengthAdjust="spacingAndGlyphs">Shape</text>
<text x="1142.87" y="262.90" font-size="19.50" fill="#111111" stroke="#f1f1f1" stroke-width="0.3" textLength="53.96" lengthAdjust="spacingAndGlyphs">Ink to</text>
<text x="1145.36" y="292.40" font-size="19.50" fill="#111111" stroke="#f1f1f1" stroke-width="0.3" textLength="49.61" lengthAdjust="spacingAndGlyphs">Math</text>
<text x="1257.57" y="263.70" font-size="19.50" fill="#111111" stroke="#f1f1f1" stroke-width="0.3" textLength="26.77" lengthAdjust="spacingAndGlyphs">Ink</text>
<text x="1239.98" y="293.20" font-size="19.50" fill="#111111" stroke="#f1f1f1" stroke-width="0.3" textLength="61.97" lengthAdjust="spacingAndGlyphs">Replay</text>
<text x="380.98" y="335.70" font-size="18.60" fill="#161616" stroke="#f1f1f1" stroke-width="0.3" textLength="119.33" lengthAdjust="spacingAndGlyphs">Drawing Tools</text>
<text x="883.00" y="335.70" font-size="18.60" fill="#161616" stroke="#f1f1f1" stroke-width="0.3" textLength="61.78" lengthAdjust="spacingAndGlyphs">Stencils</text>
<text x="1059.40" y="335.70" font-size="18.60" fill="#161616" stroke="#f1f1f1" stroke-width="0.3" textLength="63.59" lengthAdjust="spacingAndGlyphs">Convert</text>
<text x="1241.46" y="335.70" font-size="18.60" fill="#161616" stroke="#f1f1f1" stroke-width="0.3" textLength="54.48" lengthAdjust="spacingAndGlyphs">Replay</text>
</svg>
</body></html>
